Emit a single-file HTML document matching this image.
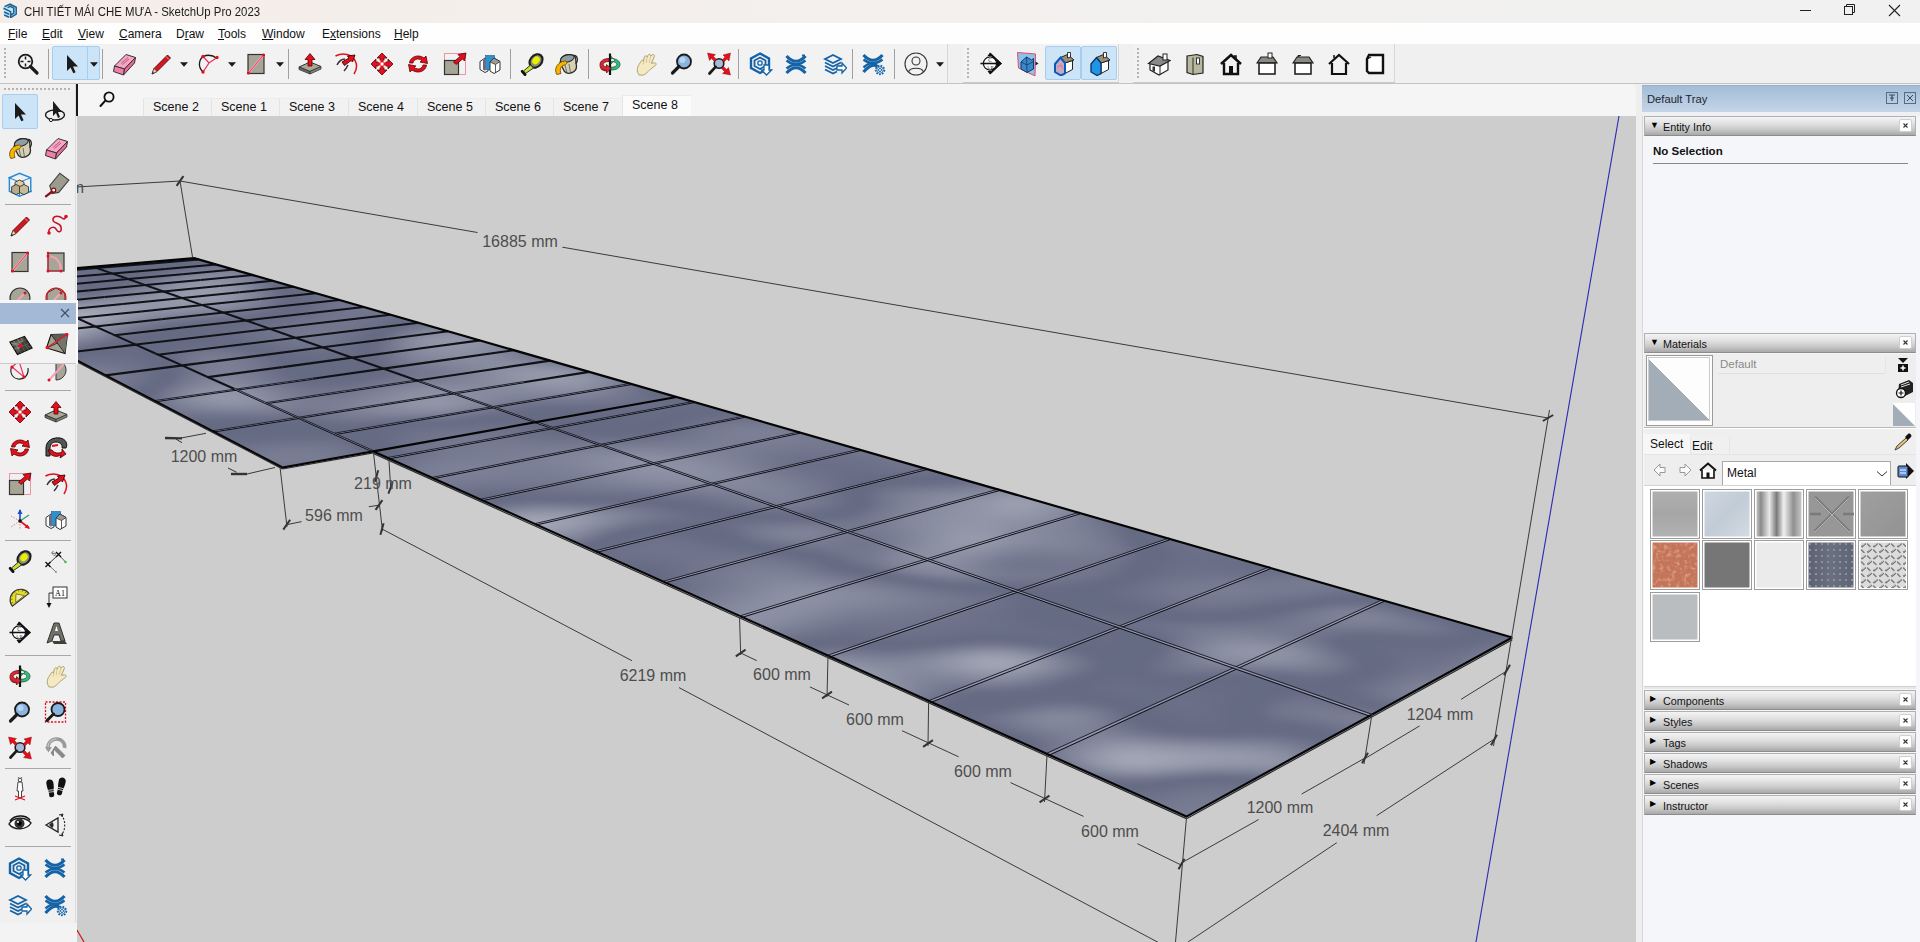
<!DOCTYPE html>
<html><head><meta charset="utf-8">
<style>
*{margin:0;padding:0;box-sizing:border-box}
html,body{width:1920px;height:942px;overflow:hidden;background:#f0f0f0;font-family:"Liberation Sans",sans-serif;color:#000}
.a{position:absolute}
#title{left:0;top:0;width:1920px;height:23px;background:linear-gradient(90deg,#f5ede9 0%,#f4efec 30%,#f2f1f0 70%,#f1f1f1 100%)}
#title .t{left:24px;top:4.5px;font-size:12.4px;color:#1b1b1b;white-space:nowrap;transform:scaleX(0.92);transform-origin:0 0}
#menu{left:0;top:23px;width:1920px;height:21px;background:#fefefe}
#menu span{position:absolute;top:4px;font-size:12px;color:#111;white-space:nowrap}
#tb{left:0;top:44px;width:1920px;height:40px;background:#f0f0f0;border-bottom:1px solid #cfcfcf}
.grp{position:absolute;top:0;height:39px;background:#f3f3f3;border-right:1px solid #dadada;border-bottom:1px solid #c8c8c8}
.grip{position:absolute;width:2px;background:repeating-linear-gradient(#b8b8b8 0 2px,transparent 2px 4px)}
.sep{position:absolute;width:1px;background:#a8a8a8}
.hl{position:absolute;background:#cce4f7;border:1px solid #99c9ef}
#tabs{left:77px;top:84px;width:1559px;height:32px;background:#f5f5f5;border-top-right-radius:6px}
.tab{position:absolute;top:14px;height:18px;border-left:1px solid #e4e4e4;border-top:1px solid #ececec;font-size:12.5px;color:#111;padding-left:9px;line-height:18px;background:#f2f2f2;white-space:nowrap}
#lt{left:0;top:84px;width:76px;height:839px;background:#f0f0f0;border-right:1px solid #dcdcdc}
#tray{left:1642px;top:85px;width:278px;height:857px;background:#f4f5fa}
.hdr{position:absolute;left:2px;width:272px;height:19px;background:linear-gradient(#f2f2f2 0%,#dcdcdc 40%,#c4c4c4 70%,#a9a9a9 100%);border:1px solid #9a9a9a;font-size:11.5px;color:#111}
.hdr .tri{position:absolute;left:6px;top:3px;font-size:9px}
.hdr .nm{position:absolute;left:19px;top:3px}
.hdr .x{position:absolute;right:4px;top:2px;width:12px;height:12px;background:#fff;border-radius:2px;font-size:9px;line-height:12px;text-align:center;color:#222}
</style></head><body>
<div id="title" class="a"><svg class="a" style="left:2px;top:3px" width="16" height="16" viewBox="0 0 16 16"><path d="M1.5 4 L8 1 L14.5 4 L14.5 11.5 L8.5 15 L1.5 12 Z" fill="#bfe6f8"/><g fill="none" stroke="#1d5f90" stroke-width="1.5"><path d="M2.5 3.6 L8 1.2 L14.2 4.2 L14.2 11.2 L9 14.4"/><path d="M5.5 4.6 L8.2 3.4 L11.8 5.2 L11.8 10.2 L9 12"/><path d="M1.5 5.2 L8.6 8.6 L8.6 15"/><path d="M2.2 9 L7 11.2"/><path d="M2.2 12 L7 14.3"/></g></svg>
<div class="a t">CHI TIẾT MÁI CHE MƯA - SketchUp Pro 2023</div>
<svg class="a" style="left:1790px;top:0" width="130" height="23"><line x1="10" y1="10.5" x2="21" y2="10.5" stroke="#222" stroke-width="1"/><rect x="54.5" y="6.5" width="8" height="8" fill="none" stroke="#222"/><path d="M56.5 6.5 V4.5 H64.5 V12.5 H62.5" fill="none" stroke="#222"/><path d="M99 5 L110 16 M110 5 L99 16" stroke="#222" stroke-width="1.1"/></svg>
</div>
<div id="menu" class="a">
<span style="left:8px"><u>F</u>ile</span><span style="left:42px"><u>E</u>dit</span><span style="left:78px"><u>V</u>iew</span><span style="left:119px"><u>C</u>amera</span><span style="left:176px">D<u>r</u>aw</span><span style="left:218px"><u>T</u>ools</span><span style="left:262px"><u>W</u>indow</span><span style="left:322px">E<u>x</u>tensions</span><span style="left:394px"><u>H</u>elp</span>
</div>
<div id="tb" class="a">
</div><div class="a" style="left:0;top:44px;width:948px;height:39px;background:#f2f2f2;border-right:1px solid #d6d6d6"></div><div class="a" style="left:963px;top:44px;width:156px;height:39px;background:#f2f2f2;border-right:1px solid #d6d6d6;border-bottom:1px solid #c8c8c8"></div><div class="a" style="left:1133px;top:44px;width:262px;height:39px;background:#f2f2f2;border-right:1px solid #d6d6d6;border-bottom:1px solid #c8c8c8"></div><div class="a" style="left:0;top:83px;width:1920px;height:1px;background:#c4c4c4"></div><div class="a" style="left:4px;top:48px;width:2px;height:32px;background:repeating-linear-gradient(#b4b4b4 0 2px,transparent 2px 4px)"></div><div class="a" style="left:967px;top:48px;width:2px;height:32px;background:repeating-linear-gradient(#b4b4b4 0 2px,transparent 2px 4px)"></div><div class="a" style="left:1137px;top:48px;width:2px;height:32px;background:repeating-linear-gradient(#b4b4b4 0 2px,transparent 2px 4px)"></div><div class="a" style="left:52px;top:46px;width:48px;height:34px;background:#cce4f7;border:1px solid #a6cdf0;border-radius:2px"></div><div class="a" style="left:87px;top:47px;width:1px;height:32px;background:#a6cdf0"></div><div class="a" style="left:1045px;top:46px;width:36px;height:34px;background:#cce4f7;border:1px solid #a6cdf0;border-radius:2px"></div><div class="a" style="left:1081px;top:46px;width:36px;height:34px;background:#cce4f7;border:1px solid #a6cdf0;border-radius:2px"></div><svg class="a" style="left:16px;top:52px" width="24" height="24" viewBox="0 0 24 24"><circle cx="9.5" cy="9.5" r="6.8" fill="none" stroke="#1b1b1b" stroke-width="1.8"/><path d="M9.5 4.5V7.5M9.5 11.5V14.5M4.5 9.5H7.5M11.5 9.5H14.5" stroke="#1b1b1b" stroke-width="1.5"/><path d="M14.5 14.5 L21 21" stroke="#1b1b1b" stroke-width="3.2" stroke-linecap="round"/></svg><div class="a" style="left:48px;top:49px;width:1px;height:30px;background:#a0a0a0"></div><div class="a" style="left:102px;top:49px;width:1px;height:30px;background:#a0a0a0"></div><svg class="a" style="left:60px;top:52px" width="24" height="24" viewBox="0 0 24 24"><path d="M7 3 L7 19 L10.6 15.6 L13.3 21.3 L15.6 20.2 L13 14.6 L18 14.6 Z" fill="#1b1b1b"/></svg><svg class="a" style="left:90px;top:62px" width="8" height="5" viewBox="0 0 7 4"><path d="M0 0 L7 0 L3.5 4 Z" fill="#1a1a1a"/></svg><svg class="a" style="left:112px;top:52px" width="24" height="24" viewBox="0 0 24 24"><path d="M2.5 14 L14 2.5 L23.5 5.5 L12.5 17 Z" fill="#f7a6c4" stroke="#333" stroke-width="1"/><path d="M2.5 14 L12.5 17 L11.5 23 L1.5 19.5 Z" fill="#f27fa8" stroke="#333" stroke-width="1"/><path d="M12.5 17 L23.5 5.5 L22.5 11 L11.5 23 Z" fill="#e66a9c" stroke="#333" stroke-width="1"/><path d="M9 11.5 L16 5.5 M10.5 12.5 L17 7" stroke="#9a3a6a" stroke-width="0.7"/></svg><svg class="a" style="left:149px;top:52px" width="24" height="24" viewBox="0 0 24 24"><path d="M3 22 L5 16.5 L18.5 3 L21.5 6 L8 19.5 Z" fill="#d8141e" stroke="#4a0a0a" stroke-width="0.9"/><path d="M3 22 L5 16.5 L8 19.5 Z" fill="#e8d8b0" stroke="#333" stroke-width="0.6"/><path d="M3 22 L3.8 19.8 L5.2 21.2Z" fill="#222"/><path d="M17 4.5 L20 7.5" stroke="#f0a0a0" stroke-width="1"/></svg><svg class="a" style="left:180px;top:62px" width="8" height="5" viewBox="0 0 7 4"><path d="M0 0 L7 0 L3.5 4 Z" fill="#1a1a1a"/></svg><svg class="a" style="left:197px;top:52px" width="24" height="24" viewBox="0 0 24 24"><path d="M6 20 C0 14 2 5 9 3.5 C13 2.7 17 4 20 6.5" fill="none" stroke="#1b1b1b" stroke-width="1.3"/><path d="M6 4.5 L12 11 L20 5.5 M12 11 L6 20" stroke="#e8305a" stroke-width="1.3" fill="none"/><circle cx="6" cy="4.5" r="1.7" fill="#e0101e"/><circle cx="20" cy="5.5" r="1.7" fill="#e0101e"/><circle cx="6" cy="20" r="1.7" fill="#e0101e"/></svg><svg class="a" style="left:228px;top:62px" width="8" height="5" viewBox="0 0 7 4"><path d="M0 0 L7 0 L3.5 4 Z" fill="#1a1a1a"/></svg><svg class="a" style="left:244px;top:52px" width="24" height="24" viewBox="0 0 24 24"><rect x="4" y="2.5" width="16" height="19" fill="#a7a696" stroke="#333" stroke-width="1.2"/><path d="M4.5 21 L19.5 3" stroke="#f2a2b8" stroke-width="2.4"/><path d="M4.5 21 L19.5 3" stroke="#e0304a" stroke-width="0.8"/><circle cx="19.5" cy="3" r="1.6" fill="#e0101e"/><circle cx="4.5" cy="21" r="1.6" fill="#e0101e"/></svg><svg class="a" style="left:276px;top:62px" width="8" height="5" viewBox="0 0 7 4"><path d="M0 0 L7 0 L3.5 4 Z" fill="#1a1a1a"/></svg><div class="a" style="left:288px;top:49px;width:1px;height:30px;background:#a0a0a0"></div><svg class="a" style="left:298px;top:52px" width="24" height="24" viewBox="0 0 24 24"><path d="M1 15 L12 10 L23 14.5 L12 19.5 Z" fill="#a9a898" stroke="#333" stroke-width="1"/><path d="M1 15 L12 19.5 L12 22 L1 17.5 Z" fill="#6d6c60" stroke="#333" stroke-width="0.8"/><path d="M12 19.5 L23 14.5 L23 17 L12 22 Z" fill="#88877a" stroke="#333" stroke-width="0.8"/><path d="M12 1.5 L17 7.5 L14 7.5 L14 14 L10 14 L10 7.5 L7 7.5 Z" fill="#e0101e" stroke="#5a0000" stroke-width="0.8"/></svg><svg class="a" style="left:334px;top:52px" width="24" height="24" viewBox="0 0 24 24"><path d="M1.5 4 C9 0 18 2 21.5 9.5 C23.5 14 22 19 20 22" fill="none" stroke="#e0101e" stroke-width="1.5"/><path d="M3 13 C5 9 8 7 11 7 M10 19 C12 17 13 15 14 13" fill="none" stroke="#333" stroke-width="1.5"/><path d="M8 10 L15 6 L13.5 4 L21 3 L18.5 10 L17 8.5 L10.5 13.5 Z" fill="#e0101e" stroke="#400" stroke-width="0.9"/></svg><svg class="a" style="left:370px;top:52px" width="24" height="24" viewBox="0 0 24 24"><path d="M12 1 L17 6 L14 6 L14 10 L18 10 L18 7 L23 12 L18 17 L18 14 L14 14 L14 18 L17 18 L12 23 L7 18 L10 18 L10 14 L6 14 L6 17 L1 12 L6 7 L6 10 L10 10 L10 6 L7 6 Z" fill="#e0101e" stroke="#600" stroke-width="0.8"/><rect x="10.5" y="10.5" width="3" height="3" fill="#fff"/><path d="M8.5 8.5h2v2h-2zM13.5 8.5h2v2h-2zM8.5 13.5h2v2h-2zM13.5 13.5h2v2h-2z" fill="#fff"/></svg><svg class="a" style="left:406px;top:52px" width="24" height="24" viewBox="0 0 24 24"><path d="M3.5 11 C4 5 12 1.5 18 6 L20 4 L21.5 11.5 L14 10 L16 8.5 C12 5.5 7.5 7.5 7 11 Z" fill="#e0101e" stroke="#600" stroke-width="0.8"/><path d="M20.5 13 C20 19 12 22.5 6 18 L4 20 L2.5 12.5 L10 14 L8 15.5 C12 18.5 16.5 16.5 17 13 Z" fill="#e0101e" stroke="#600" stroke-width="0.8"/></svg><svg class="a" style="left:443px;top:52px" width="24" height="24" viewBox="0 0 24 24"><rect x="1.5" y="1.5" width="21" height="21" fill="none" stroke="#f08aa0" stroke-width="0.9"/><rect x="1.5" y="8.5" width="14" height="14" fill="#a7a696" stroke="#333" stroke-width="1.2"/><path d="M10.5 10 L17 4.5 L15 2.5 L23 1 L21.5 9 L19.5 7 L13 12.5 Z" fill="#e0101e" stroke="#500" stroke-width="0.8"/></svg><svg class="a" style="left:478px;top:52px" width="24" height="24" viewBox="0 0 24 24"><path d="M2 9.5 L7 6 L10 7.5 L10 19 L7 20.5 L2 17.5 Z" fill="#fff" stroke="#333" stroke-width="1"/><rect x="7.5" y="3.5" width="9" height="14" fill="#2f90d0" stroke="#1a5a90" stroke-width="0.6"/><path d="M5 8 L7.5 6.5 L7.5 19 L5 17.5Z" fill="#6a6a78"/><path d="M12 10 L16 6 L22 9.5 L22 18 L16 21.5 L12 19 Z" fill="#fff" stroke="#333" stroke-width="1"/><path d="M12 10 L16 6 L22 9.5 L17.5 12.5 Z" fill="#9a9a9a" stroke="#333" stroke-width="0.8"/><path d="M17.5 12.5 L17.5 21" stroke="#333" stroke-width="0.8"/></svg><div class="a" style="left:510px;top:49px;width:1px;height:30px;background:#a0a0a0"></div><svg class="a" style="left:520px;top:52px" width="24" height="24" viewBox="0 0 24 24"><g transform="rotate(-50 16 9)"><ellipse cx="16" cy="9" rx="8.5" ry="6.8" fill="#1e1e1e"/><ellipse cx="16" cy="9" rx="6.3" ry="4.8" fill="#8c8c7c"/><ellipse cx="16.5" cy="8.6" rx="4.2" ry="3.3" fill="#e6f000"/></g><path d="M10.5 13 L13.5 16 L5.5 21.5 L3.5 19 Z" fill="#c6e232" stroke="#222" stroke-width="0.9"/><path d="M2.2 19.3 L5 22.6" stroke="#111" stroke-width="2.8" stroke-linecap="round"/></svg><svg class="a" style="left:554px;top:52px" width="24" height="24" viewBox="0 0 24 24"><path d="M7.5 6 C10 1.5 19.5 1.5 21.5 5.5 L22.5 14.5 C22.5 20 14.5 23.5 10.5 19.5 L6 11 Z" fill="#d8d0b2" stroke="#2a2a2a" stroke-width="1.3"/><path d="M6.5 9.5 C5.5 4.5 14 1 19.5 3.5 C22.5 6.5 14.5 12.5 6.5 9.5 Z" fill="#8e9ea4" stroke="#2a2a2a" stroke-width="1.1"/><path d="M11 13 L13 21 M15 12 L16.5 21" stroke="#555" stroke-width="0.8"/><path d="M19.5 3.5 C24 3 24.5 9.5 21.5 11.5" fill="none" stroke="#2a2a2a" stroke-width="1.2"/><path d="M2.8 22.5 C-0.5 17 3.5 9.5 11.5 9 C14 9.5 13 12.5 10.5 13 C6.5 14 5.5 17.5 7 21.5 Z" fill="#f7b500" stroke="#7a5200" stroke-width="0.9"/></svg><div class="a" style="left:588px;top:49px;width:1px;height:30px;background:#a0a0a0"></div><svg class="a" style="left:598px;top:52px" width="24" height="24" viewBox="0 0 24 24"><path d="M12 1.5 L12 23" stroke="#111" stroke-width="2.2"/><path d="M11 6.5 C5.5 6.5 2 9 2 12.5 C2 15.5 4 17.5 8.5 18 L8.5 21 L13 16.5 L8.5 12.5 L8.5 15 C6.3 14.6 5.2 13.6 5.2 12.5 C5.2 10.6 7.8 9.5 11 9.5 Z" fill="#d42a32" stroke="#6a0000" stroke-width="0.7"/><path d="M2 12.5 C2 15.5 4 17.5 8.5 18 L8.5 19.5 C3.5 19 1.5 16.5 1.8 13.5Z" fill="#9a1a20"/><path d="M13 6.5 C18.5 6.5 22 9 22 12.5 C22 16 18.5 18 13 18 L13 15.3 C16.6 15.3 18.8 14 18.8 12.5 C18.8 10.8 16.5 9.5 13 9.5 L13 11.8 L16.8 8.2 L13 4.5 Z" fill="#3ab87c" stroke="#0a5030" stroke-width="0.7"/></svg><svg class="a" style="left:634px;top:52px" width="24" height="24" viewBox="0 0 24 24"><path d="M5 23 C2.5 19.5 3 15.5 5 12.5 L7 9.5 C7.6 7.6 9.3 7.7 9.6 9.3 L10.2 5.2 C10.7 3.2 12.9 3.3 13.1 5.2 L13.8 3.6 C14.4 1.6 16.9 1.9 16.8 4 L17.8 3 C18.9 1.8 21 2.9 20.3 4.7 L17.4 11.3 L20.3 10.8 C22.4 10.6 22.8 13 20.8 13.9 L16.4 17.3 C13.6 20.2 11.4 22.2 9.2 23.2 Z" fill="#f5e9c2" stroke="#a89868" stroke-width="0.9"/><path d="M9.6 9.3 L9.2 12.5 M13.1 5.2 L12.3 11 M16.8 4 L15.2 10.8" stroke="#c8b888" stroke-width="0.7" fill="none"/></svg><svg class="a" style="left:670px;top:52px" width="24" height="24" viewBox="0 0 24 24"><circle cx="14" cy="9.5" r="7" fill="#8ab4e0" stroke="#1b1b1b" stroke-width="1.8"/><circle cx="12.5" cy="8" r="3" fill="#b8d4f0"/><path d="M9 14.5 L2.5 21" stroke="#1b1b1b" stroke-width="3.2" stroke-linecap="round"/></svg><svg class="a" style="left:707px;top:52px" width="24" height="24" viewBox="0 0 24 24"><circle cx="12" cy="11.5" r="4.8" fill="#a4bcd8" stroke="#1b1b1b" stroke-width="1.6"/><path d="M8.6 14.9 L2.5 21.5" stroke="#1b1b1b" stroke-width="2.8" stroke-linecap="round"/><path d="M0.5 1 L8.5 2.5 L6.5 4.5 L9.5 7.5 L7.5 9.5 L4.5 6.5 L2.5 8.5Z M23.5 1 L22 9 L20 7 L17 10 L15 8 L18 5 L16 3Z M23.5 23 L15.5 21.5 L17.5 19.5 L14.5 16.5 L16.5 14.5 L19.5 17.5 L21.5 15.5Z" fill="#e0101e" stroke="#800" stroke-width="0.4"/></svg><div class="a" style="left:738px;top:49px;width:1px;height:30px;background:#a0a0a0"></div><svg class="a" style="left:749px;top:52px" width="24" height="24" viewBox="0 0 24 24"><path d="M11 1.5 L20 6.5 L20 16 L11 21 L2 16 L2 6.5 Z" fill="none" stroke="#1463a6" stroke-width="2.4"/><path d="M11 5.5 L16.5 8.5 L16.5 14 L11 17 L5.5 14 L5.5 8.5 Z" fill="none" stroke="#1463a6" stroke-width="1.8"/><circle cx="11" cy="11" r="2.2" fill="none" stroke="#1463a6" stroke-width="1.3"/><path d="M15 13 L20 13 L20 18 L22.5 18 L17.5 23 L12.5 18 L15 18 Z" fill="#fff" stroke="#1463a6" stroke-width="1.3"/></svg><svg class="a" style="left:785px;top:53px" width="24" height="24" viewBox="0 0 24 24"><g fill="none" stroke="#1463a6" stroke-linecap="butt"><path d="M1.5 3 Q11 13.5 20.5 3" stroke-width="3.2"/><path d="M1.5 20 Q11 9.5 20.5 20" stroke-width="3.2"/><path d="M1.5 7.5 Q11 15 20.5 7.5" stroke-width="2.4"/><path d="M1.5 15.5 Q11 8 20.5 15.5" stroke-width="2.4"/></g><path d="M17 1.5h3v2h-3z" fill="#1463a6"/></svg><svg class="a" style="left:823px;top:52px" width="24" height="24" viewBox="0 0 24 24"><path d="M2 7 L10 3 L18 7 L10 11 Z" fill="none" stroke="#1463a6" stroke-width="1.8"/><path d="M2 10.5 L10 14.5 L18 10.5 M2 14 L10 18 L18 14 M2 17.5 L10 21.5 L14 19.5" fill="none" stroke="#1463a6" stroke-width="1.8"/><path d="M14 14 L19 14 L19 11 L23.5 16 L19 21 L19 18 L14 18 Z" fill="#fff" stroke="#1463a6" stroke-width="1.3"/></svg><div class="a" style="left:852px;top:49px;width:1px;height:30px;background:#a0a0a0"></div><svg class="a" style="left:862px;top:52px" width="24" height="24" viewBox="0 0 24 24"><g fill="none" stroke="#1463a6"><path d="M1.5 3 Q11 13.5 20.5 3" stroke-width="3.2"/><path d="M1.5 20 Q11 9.5 16 15" stroke-width="3.2"/><path d="M1.5 7.5 Q11 15 20.5 7.5" stroke-width="2.4"/><path d="M1.5 15.5 Q9 9 14 12" stroke-width="2.4"/></g><circle cx="18" cy="18" r="4.3" fill="#fff" stroke="#1463a6" stroke-width="1.8" stroke-dasharray="1.7 1.2"/><circle cx="18" cy="18" r="3.2" fill="#fff" stroke="#1463a6" stroke-width="0.9"/><circle cx="18" cy="18" r="1.5" fill="none" stroke="#1463a6" stroke-width="1"/></svg><div class="a" style="left:894px;top:49px;width:1px;height:30px;background:#a0a0a0"></div><svg class="a" style="left:904px;top:52px" width="24" height="24" viewBox="0 0 24 24"><circle cx="12" cy="12" r="11" fill="none" stroke="#333" stroke-width="1.1"/><circle cx="12" cy="9" r="4" fill="none" stroke="#333" stroke-width="1.1"/><path d="M4.5 20 C6 15 18 15 19.5 20" fill="none" stroke="#333" stroke-width="1.1"/></svg><svg class="a" style="left:936px;top:62px" width="8" height="5" viewBox="0 0 7 4"><path d="M0 0 L7 0 L3.5 4 Z" fill="#1a1a1a"/></svg><svg class="a" style="left:979px;top:52px" width="24" height="24" viewBox="0 0 24 24"><circle cx="11" cy="11.5" r="6.6" fill="#fff" stroke="#111" stroke-width="1.2"/><path d="M1.5 11.5 H21" stroke="#111" stroke-width="1.6"/><path d="M11 1.5 L21.5 11.5 L11 21.5" fill="none" stroke="#111" stroke-width="1.8"/><path d="M23 11.5 L18 7.5 L18 15.5Z M11 0.5 L8.5 4 L13.5 4Z M11 22.5 L8.5 19 L13.5 19Z" fill="#111"/><text x="11" y="10" font-size="5.5" text-anchor="middle" font-family="Liberation Serif" fill="#111">C</text><text x="11" y="17.3" font-size="4.6" text-anchor="middle" font-family="Liberation Serif" fill="#111">A B</text></svg><svg class="a" style="left:1016px;top:52px" width="24" height="24" viewBox="0 0 24 24"><path d="M1.5 0.5 L19.5 2 L19 24 L2.5 16 Z" fill="#8ec0ec" stroke="#e04a6a" stroke-width="1"/><path d="M5 10 L10.5 5 L15.5 8 L17.5 6.5 L17.5 17 L11 20.5 L5 17Z" fill="#3a88c8" stroke="#123a66" stroke-width="1"/><path d="M10.5 5 L11 20.5 M5 10 L11 13 L17.5 9.5" stroke="#123a66" stroke-width="0.8" fill="none"/><path d="M19.5 9.5 L22.5 11.5 L19.5 13.5Z" fill="#222"/></svg><svg class="a" style="left:1052px;top:52px" width="24" height="24" viewBox="0 0 24 24"><path d="M13 11 L20.5 8.5 L20.5 17.5 L13 21.5 Z" fill="#fff" stroke="#222" stroke-width="1"/><path d="M8.5 5.5 L15.5 2.5 L22 8 L13 11 Z" fill="#9a8e78" stroke="#222" stroke-width="1"/><path d="M15.5 0.5 L18.5 0.5 L18.5 5 L15.5 6Z" fill="#fff" stroke="#222" stroke-width="0.9"/><path d="M3 12 L8.5 5.5 L13 11 L13 21.5 L9 23.5 L3 20 Z" fill="#c8a8c0" stroke="#0a5ab8" stroke-width="2"/><path d="M5.5 15 L9 13 L11 17" stroke="#e06080" stroke-width="0.8" fill="none"/></svg><svg class="a" style="left:1088px;top:52px" width="24" height="24" viewBox="0 0 24 24"><path d="M13 11 L20.5 8.5 L20.5 17.5 L13 21.5 Z" fill="#fff" stroke="#222" stroke-width="1"/><path d="M8.5 5.5 L15.5 2.5 L22 8 L13 11 Z" fill="#9a8e78" stroke="#222" stroke-width="1"/><path d="M15.5 0.5 L18.5 0.5 L18.5 5 L15.5 6Z" fill="#fff" stroke="#222" stroke-width="0.9"/><path d="M3 12 L8.5 5.5 L13 11 L13 21.5 L9 23.5 L3 20 Z" fill="#1e96e8" stroke="#0a3060" stroke-width="1.3"/></svg><svg class="a" style="left:1147px;top:52px" width="24" height="24" viewBox="0 0 24 24"><path d="M3 11 L12 5 L21 9 L21 18 L12 23 L3 18 Z" fill="#fff" stroke="#222" stroke-width="1.2"/><path d="M1.5 11.5 L11 4 L23 8.5 L13 14 Z" fill="#8a8a8a" stroke="#222" stroke-width="1.2"/><path d="M13 14 L13 23" stroke="#222" stroke-width="1"/><rect x="16" y="2" width="4" height="6" fill="#fff" stroke="#222" stroke-width="1"/><rect x="5.5" y="14.5" width="2.5" height="5" fill="#333"/></svg><svg class="a" style="left:1183px;top:52px" width="24" height="24" viewBox="0 0 24 24"><path d="M4 4 L14 2.5 L20 4.5 L20 21 L10 22.5 L4 20.5 Z" fill="#b8b8a0" stroke="#222" stroke-width="1.2"/><path d="M10 5.5 L10 22.5" stroke="#222" stroke-width="0.9"/><rect x="13.5" y="6" width="3" height="6" fill="#fff" stroke="#222" stroke-width="0.9"/></svg><svg class="a" style="left:1219px;top:52px" width="24" height="24" viewBox="0 0 24 24"><path d="M2 12 L12 3 L22 12" fill="none" stroke="#111" stroke-width="2.6"/><path d="M5 11 L5 22 L19 22 L19 11" fill="none" stroke="#111" stroke-width="2.4"/><rect x="10" y="14" width="4" height="8" fill="#111"/><path d="M15 4 L17 4 L17 7" stroke="#111" stroke-width="1.5" fill="none"/></svg><svg class="a" style="left:1255px;top:52px" width="24" height="24" viewBox="0 0 24 24"><path d="M2 11 L6 5 L18 5 L22 11 Z" fill="#8a8a82" stroke="#222" stroke-width="1.2"/><rect x="4" y="11" width="16" height="11" fill="#fff" stroke="#222" stroke-width="1.6"/><rect x="13" y="1" width="4" height="5" fill="#fff" stroke="#222" stroke-width="1"/></svg><svg class="a" style="left:1291px;top:52px" width="24" height="24" viewBox="0 0 24 24"><path d="M2 11 L6 5 L18 5 L22 11 Z" fill="#8a8a82" stroke="#222" stroke-width="1.2"/><rect x="4" y="11" width="16" height="11" fill="#fff" stroke="#222" stroke-width="1.6"/><path d="M7 5 L7 3.5 L10 3.5" stroke="#222" stroke-width="1"/></svg><svg class="a" style="left:1327px;top:52px" width="24" height="24" viewBox="0 0 24 24"><path d="M2 12 L12 3 L22 12" fill="none" stroke="#111" stroke-width="2.2"/><path d="M5 11 L5 22 L19 22 L19 11" fill="none" stroke="#111" stroke-width="2.2"/><path d="M7 6 L7 3" stroke="#111" stroke-width="1.5"/></svg><svg class="a" style="left:1363px;top:52px" width="24" height="24" viewBox="0 0 24 24"><path d="M6 3 L20 3 L20 21 L6 21 L4 19 L4 7 Z" fill="#fff" stroke="#111" stroke-width="2.4"/><path d="M4 7 L8 5" stroke="#111" stroke-width="1.2"/></svg><div>
</div>
<div id="tabs" class="a">
<svg class="a" style="left:22px;top:6px" width="16" height="20" viewBox="0 0 16 20"><circle cx="10" cy="7" r="4.6" fill="none" stroke="#111" stroke-width="1.8"/><path d="M6.6 10.4 L1.5 16" stroke="#111" stroke-width="2" stroke-linecap="round"/></svg><div class="tab" style="left:66px;width:69px;line-height:16px">Scene 2</div><div class="tab" style="left:134px;width:69px;line-height:16px">Scene 1</div><div class="tab" style="left:202px;width:69px;line-height:16px">Scene 3</div><div class="tab" style="left:271px;width:69px;line-height:16px">Scene 4</div><div class="tab" style="left:340px;width:69px;line-height:16px">Scene 5</div><div class="tab" style="left:408px;width:69px;line-height:16px">Scene 6</div><div class="tab" style="left:476px;width:69px;line-height:16px">Scene 7</div><div class="tab" style="left:545px;top:11px;height:21px;width:69px;background:#fbfbfb;line-height:19px">Scene 8</div>
</div>
<div class="a" style="left:76px;top:84px;width:2px;height:32px;background:#1a1a1a"></div>
<div id="lt" class="a">
</div><div class="a" style="left:4px;top:88px;width:68px;height:2px;background:repeating-linear-gradient(90deg,#b4b4b4 0 2px,transparent 2px 4px)"></div><div class="a" style="left:2px;top:94px;width:36px;height:35px;background:#cce4f7;border:1px solid #a6cdf0;border-radius:2px"></div><svg class="a" style="left:8px;top:100px" width="24" height="24" viewBox="0 0 24 24"><path d="M7 3 L7 19 L10.6 15.6 L13.3 21.3 L15.6 20.2 L13 14.6 L18 14.6 Z" fill="#1b1b1b"/></svg><svg class="a" style="left:44px;top:100px" width="24" height="24" viewBox="0 0 24 24"><ellipse cx="11" cy="15" rx="9.5" ry="5" fill="none" stroke="#1b1b1b" stroke-width="1.4"/><path d="M9 1 L9 16 L12 13 L14 18 L16 17 L14 12 L18 12 Z" fill="#1b1b1b"/><circle cx="7" cy="20" r="1.6" fill="#fff" stroke="#1b1b1b" stroke-width="1"/></svg><svg class="a" style="left:8px;top:136px" width="24" height="24" viewBox="0 0 24 24"><path d="M7.5 6 C10 1.5 19.5 1.5 21.5 5.5 L22.5 14.5 C22.5 20 14.5 23.5 10.5 19.5 L6 11 Z" fill="#d8d0b2" stroke="#2a2a2a" stroke-width="1.3"/><path d="M6.5 9.5 C5.5 4.5 14 1 19.5 3.5 C22.5 6.5 14.5 12.5 6.5 9.5 Z" fill="#8e9ea4" stroke="#2a2a2a" stroke-width="1.1"/><path d="M11 13 L13 21 M15 12 L16.5 21" stroke="#555" stroke-width="0.8"/><path d="M19.5 3.5 C24 3 24.5 9.5 21.5 11.5" fill="none" stroke="#2a2a2a" stroke-width="1.2"/><path d="M2.8 22.5 C-0.5 17 3.5 9.5 11.5 9 C14 9.5 13 12.5 10.5 13 C6.5 14 5.5 17.5 7 21.5 Z" fill="#f7b500" stroke="#7a5200" stroke-width="0.9"/></svg><svg class="a" style="left:44px;top:136px" width="24" height="24" viewBox="0 0 24 24"><path d="M2.5 14 L14 2.5 L23.5 5.5 L12.5 17 Z" fill="#f7a6c4" stroke="#333" stroke-width="1"/><path d="M2.5 14 L12.5 17 L11.5 23 L1.5 19.5 Z" fill="#f27fa8" stroke="#333" stroke-width="1"/><path d="M12.5 17 L23.5 5.5 L22.5 11 L11.5 23 Z" fill="#e66a9c" stroke="#333" stroke-width="1"/><path d="M9 11.5 L16 5.5 M10.5 12.5 L17 7" stroke="#9a3a6a" stroke-width="0.7"/></svg><svg class="a" style="left:8px;top:214px" width="24" height="24" viewBox="0 0 24 24"><path d="M3 22 L5 16.5 L18.5 3 L21.5 6 L8 19.5 Z" fill="#d8141e" stroke="#4a0a0a" stroke-width="0.9"/><path d="M3 22 L5 16.5 L8 19.5 Z" fill="#e8d8b0" stroke="#333" stroke-width="0.6"/><path d="M3 22 L3.8 19.8 L5.2 21.2Z" fill="#222"/><path d="M17 4.5 L20 7.5" stroke="#f0a0a0" stroke-width="1"/></svg><svg class="a" style="left:44px;top:214px" width="24" height="24" viewBox="0 0 24 24"><path d="M5 19 C4 13 10 12 12 15 C14 19 18 19 17 13 C16 8 8 10 9 5 C10 1 16 2 18 4 C20 6 22 4 22 2" fill="none" stroke="#c8102a" stroke-width="1.6"/><circle cx="5" cy="19" r="1.8" fill="#e0101e"/><circle cx="22" cy="2.5" r="1.8" fill="#e0101e"/></svg><svg class="a" style="left:8px;top:250px" width="24" height="24" viewBox="0 0 24 24"><rect x="4" y="2.5" width="16" height="19" fill="#a7a696" stroke="#333" stroke-width="1.2"/><path d="M4.5 21 L19.5 3" stroke="#f2a2b8" stroke-width="2.4"/><path d="M4.5 21 L19.5 3" stroke="#e0304a" stroke-width="0.8"/><circle cx="19.5" cy="3" r="1.6" fill="#e0101e"/><circle cx="4.5" cy="21" r="1.6" fill="#e0101e"/></svg><svg class="a" style="left:44px;top:250px" width="24" height="24" viewBox="0 0 24 24"><rect x="4" y="3" width="16" height="18" fill="#a7a696" stroke="#333" stroke-width="1.2"/><path d="M4 6 C12 6 17 12 17 21" fill="none" stroke="#f2a2b8" stroke-width="2.2"/><path d="M4 6 L4 21 L17 21" stroke="#e0304a" stroke-width="1.2" fill="none"/><circle cx="4" cy="6" r="1.5" fill="#e0101e"/><circle cx="4" cy="21" r="1.5" fill="#e0101e"/><circle cx="17" cy="21" r="1.5" fill="#e0101e"/><circle cx="4" cy="3" r="1.2" fill="#e0101e"/></svg><svg class="a" style="left:8px;top:286px" width="24" height="24" viewBox="0 0 24 24"><circle cx="12" cy="12" r="10" fill="#a7a696" stroke="#333" stroke-width="1.2"/><path d="M7 17 L17 7" stroke="#f2a2b8" stroke-width="2.2"/><circle cx="7" cy="17" r="1.5" fill="#e0101e"/><circle cx="17" cy="7" r="1.5" fill="#e0101e"/></svg><svg class="a" style="left:44px;top:286px" width="24" height="24" viewBox="0 0 24 24"><path d="M12 2 L21 7 L21 17 L12 22 L3 17 L3 7Z" fill="#a7a696" stroke="#333" stroke-width="1"/><circle cx="12" cy="12" r="10" fill="none" stroke="#e0101e" stroke-width="1.2"/><path d="M7 17 L17 7" stroke="#f2a2b8" stroke-width="2.2"/><circle cx="7" cy="17" r="1.5" fill="#e0101e"/><circle cx="17" cy="7" r="1.5" fill="#e0101e"/></svg><svg class="a" style="left:8px;top:400px" width="24" height="24" viewBox="0 0 24 24"><path d="M12 1 L17 6 L14 6 L14 10 L18 10 L18 7 L23 12 L18 17 L18 14 L14 14 L14 18 L17 18 L12 23 L7 18 L10 18 L10 14 L6 14 L6 17 L1 12 L6 7 L6 10 L10 10 L10 6 L7 6 Z" fill="#e0101e" stroke="#600" stroke-width="0.8"/><rect x="10.5" y="10.5" width="3" height="3" fill="#fff"/><path d="M8.5 8.5h2v2h-2zM13.5 8.5h2v2h-2zM8.5 13.5h2v2h-2zM13.5 13.5h2v2h-2z" fill="#fff"/></svg><svg class="a" style="left:44px;top:400px" width="24" height="24" viewBox="0 0 24 24"><path d="M1 15 L12 10 L23 14.5 L12 19.5 Z" fill="#a9a898" stroke="#333" stroke-width="1"/><path d="M1 15 L12 19.5 L12 22 L1 17.5 Z" fill="#6d6c60" stroke="#333" stroke-width="0.8"/><path d="M12 19.5 L23 14.5 L23 17 L12 22 Z" fill="#88877a" stroke="#333" stroke-width="0.8"/><path d="M12 1.5 L17 7.5 L14 7.5 L14 14 L10 14 L10 7.5 L7 7.5 Z" fill="#e0101e" stroke="#5a0000" stroke-width="0.8"/></svg><svg class="a" style="left:8px;top:436px" width="24" height="24" viewBox="0 0 24 24"><path d="M3.5 11 C4 5 12 1.5 18 6 L20 4 L21.5 11.5 L14 10 L16 8.5 C12 5.5 7.5 7.5 7 11 Z" fill="#e0101e" stroke="#600" stroke-width="0.8"/><path d="M20.5 13 C20 19 12 22.5 6 18 L4 20 L2.5 12.5 L10 14 L8 15.5 C12 18.5 16.5 16.5 17 13 Z" fill="#e0101e" stroke="#600" stroke-width="0.8"/></svg><svg class="a" style="left:44px;top:436px" width="24" height="24" viewBox="0 0 24 24"><path d="M2 12 C2 4 10 1 16 2 C22 3 24 8 22 12 L18 12 C19 9 16 6 12 6 C8 6 6 9 6 12 L6 20 L2 20Z" fill="#555" stroke="#111" stroke-width="1"/><path d="M4 14 C6 20 12 22 17 19 L16 22 L22 18 L18 13 L18 16 C14 18 10 17 8 14Z" fill="#e0101e" stroke="#400" stroke-width="0.8"/><path d="M8 10 L14 9" stroke="#e0101e" stroke-width="2"/></svg><svg class="a" style="left:8px;top:472px" width="24" height="24" viewBox="0 0 24 24"><rect x="1.5" y="1.5" width="21" height="21" fill="none" stroke="#f08aa0" stroke-width="0.9"/><rect x="1.5" y="8.5" width="14" height="14" fill="#a7a696" stroke="#333" stroke-width="1.2"/><path d="M10.5 10 L17 4.5 L15 2.5 L23 1 L21.5 9 L19.5 7 L13 12.5 Z" fill="#e0101e" stroke="#500" stroke-width="0.8"/></svg><svg class="a" style="left:44px;top:472px" width="24" height="24" viewBox="0 0 24 24"><path d="M1.5 4 C9 0 18 2 21.5 9.5 C23.5 14 22 19 20 22" fill="none" stroke="#e0101e" stroke-width="1.5"/><path d="M3 13 C5 9 8 7 11 7 M10 19 C12 17 13 15 14 13" fill="none" stroke="#333" stroke-width="1.5"/><path d="M8 10 L15 6 L13.5 4 L21 3 L18.5 10 L17 8.5 L10.5 13.5 Z" fill="#e0101e" stroke="#400" stroke-width="0.9"/></svg><svg class="a" style="left:8px;top:508px" width="24" height="24" viewBox="0 0 24 24"><path d="M12 13 L12 2" stroke="#1a4ad0" stroke-width="1.6"/><path d="M12 1 L9.5 6 L14.5 6Z" fill="#1a4ad0"/><path d="M12 13 L21 20" stroke="#e0101e" stroke-width="1.6"/><path d="M22 21 L16.5 19.5 L19.5 16.5Z" fill="#e0101e"/><path d="M12 13 L21 7" stroke="#30a060" stroke-width="1.4"/><path d="M12 13 L3 19 M12 13 L3 8 M12 13 L12 22" stroke="#f08080" stroke-width="1" stroke-dasharray="1.5 1.5"/><circle cx="12" cy="13" r="1.8" fill="#111"/></svg><svg class="a" style="left:44px;top:508px" width="24" height="24" viewBox="0 0 24 24"><path d="M2 9.5 L7 6 L10 7.5 L10 19 L7 20.5 L2 17.5 Z" fill="#fff" stroke="#333" stroke-width="1"/><rect x="7.5" y="3.5" width="9" height="14" fill="#2f90d0" stroke="#1a5a90" stroke-width="0.6"/><path d="M5 8 L7.5 6.5 L7.5 19 L5 17.5Z" fill="#6a6a78"/><path d="M12 10 L16 6 L22 9.5 L22 18 L16 21.5 L12 19 Z" fill="#fff" stroke="#333" stroke-width="1"/><path d="M12 10 L16 6 L22 9.5 L17.5 12.5 Z" fill="#9a9a9a" stroke="#333" stroke-width="0.8"/><path d="M17.5 12.5 L17.5 21" stroke="#333" stroke-width="0.8"/></svg><svg class="a" style="left:8px;top:549px" width="24" height="24" viewBox="0 0 24 24"><g transform="rotate(-50 16 9)"><ellipse cx="16" cy="9" rx="8.5" ry="6.8" fill="#1e1e1e"/><ellipse cx="16" cy="9" rx="6.3" ry="4.8" fill="#8c8c7c"/><ellipse cx="16.5" cy="8.6" rx="4.2" ry="3.3" fill="#e6f000"/></g><path d="M10.5 13 L13.5 16 L5.5 21.5 L3.5 19 Z" fill="#c6e232" stroke="#222" stroke-width="0.9"/><path d="M2.2 19.3 L5 22.6" stroke="#111" stroke-width="2.8" stroke-linecap="round"/></svg><svg class="a" style="left:44px;top:549px" width="24" height="24" viewBox="0 0 24 24"><path d="M4 15.5 L14.5 5.5" stroke="#222" stroke-width="0.9"/><path d="M14.5 5.5 L21.5 13" stroke="#333" stroke-width="0.8"/><path d="M4 15.5 L12 23" stroke="#555" stroke-width="0.8"/><path d="M12 3 L17 8 M17 3 L12 8 M1.5 13 L6.5 18 M6.5 13 L1.5 18" stroke="#111" stroke-width="1.4"/><circle cx="21.5" cy="13" r="1.3" fill="#40c050"/><circle cx="12" cy="23" r="0.9" fill="#888"/><text x="8.5" y="8" font-size="6.5" font-family="Liberation Sans" fill="#222" transform="rotate(-40 8.5 6)">5</text></svg><svg class="a" style="left:8px;top:585px" width="24" height="24" viewBox="0 0 24 24"><g transform="rotate(-38 12 14)"><path d="M1.5 15 A10.5 10.5 0 0 1 22.5 15 Z" fill="#e4dc1c" stroke="#333" stroke-width="1.1"/><path d="M6.5 14 L12 7.5 L17.5 14 Z" fill="#f4f0a8" stroke="#555" stroke-width="0.7"/><path d="M3 12 L4.5 12.6 M4.5 8.5 L5.8 9.6 M7.5 6 L8.3 7.3 M12 4.6 V6 M16.5 6 L15.7 7.3 M19.5 8.5 L18.2 9.6 M21 12 L19.5 12.6" stroke="#555" stroke-width="0.7"/></g></svg><svg class="a" style="left:44px;top:585px" width="24" height="24" viewBox="0 0 24 24"><rect x="9" y="2" width="14" height="11" fill="#fff" stroke="#333" stroke-width="1"/><text x="16" y="11" font-size="8" text-anchor="middle" font-family="Liberation Serif">A1</text><path d="M5 8 L9 8 M5 8 L5 20" stroke="#333" stroke-width="1"/><path d="M2.5 18 L7.5 18 L5 23Z" fill="#111"/></svg><svg class="a" style="left:8px;top:621px" width="24" height="24" viewBox="0 0 24 24"><circle cx="11" cy="11.5" r="6.6" fill="#fff" stroke="#111" stroke-width="1.2"/><path d="M1.5 11.5 H21" stroke="#111" stroke-width="1.6"/><path d="M11 1.5 L21.5 11.5 L11 21.5" fill="none" stroke="#111" stroke-width="1.8"/><path d="M23 11.5 L18 7.5 L18 15.5Z M11 0.5 L8.5 4 L13.5 4Z M11 22.5 L8.5 19 L13.5 19Z" fill="#111"/><text x="11" y="10" font-size="5.5" text-anchor="middle" font-family="Liberation Serif" fill="#111">C</text><text x="11" y="17.3" font-size="4.6" text-anchor="middle" font-family="Liberation Serif" fill="#111">A B</text></svg><svg class="a" style="left:44px;top:621px" width="24" height="24" viewBox="0 0 24 24"><path d="M3 22 L10 2 L15 2 L21 20 L17 20 L15 14 L10 14 L8 20 Z" fill="#707068" stroke="#333" stroke-width="1"/><path d="M11 10 L12.5 5 L14 10Z" fill="#fff"/><path d="M8 20 L10 23 L23 23 L21 20" fill="#404038"/></svg><svg class="a" style="left:8px;top:664px" width="24" height="24" viewBox="0 0 24 24"><path d="M12 1.5 L12 23" stroke="#111" stroke-width="2.2"/><path d="M11 6.5 C5.5 6.5 2 9 2 12.5 C2 15.5 4 17.5 8.5 18 L8.5 21 L13 16.5 L8.5 12.5 L8.5 15 C6.3 14.6 5.2 13.6 5.2 12.5 C5.2 10.6 7.8 9.5 11 9.5 Z" fill="#d42a32" stroke="#6a0000" stroke-width="0.7"/><path d="M2 12.5 C2 15.5 4 17.5 8.5 18 L8.5 19.5 C3.5 19 1.5 16.5 1.8 13.5Z" fill="#9a1a20"/><path d="M13 6.5 C18.5 6.5 22 9 22 12.5 C22 16 18.5 18 13 18 L13 15.3 C16.6 15.3 18.8 14 18.8 12.5 C18.8 10.8 16.5 9.5 13 9.5 L13 11.8 L16.8 8.2 L13 4.5 Z" fill="#3ab87c" stroke="#0a5030" stroke-width="0.7"/></svg><svg class="a" style="left:44px;top:664px" width="24" height="24" viewBox="0 0 24 24"><path d="M5 23 C2.5 19.5 3 15.5 5 12.5 L7 9.5 C7.6 7.6 9.3 7.7 9.6 9.3 L10.2 5.2 C10.7 3.2 12.9 3.3 13.1 5.2 L13.8 3.6 C14.4 1.6 16.9 1.9 16.8 4 L17.8 3 C18.9 1.8 21 2.9 20.3 4.7 L17.4 11.3 L20.3 10.8 C22.4 10.6 22.8 13 20.8 13.9 L16.4 17.3 C13.6 20.2 11.4 22.2 9.2 23.2 Z" fill="#f5e9c2" stroke="#a89868" stroke-width="0.9"/><path d="M9.6 9.3 L9.2 12.5 M13.1 5.2 L12.3 11 M16.8 4 L15.2 10.8" stroke="#c8b888" stroke-width="0.7" fill="none"/></svg><svg class="a" style="left:8px;top:700px" width="24" height="24" viewBox="0 0 24 24"><circle cx="14" cy="9.5" r="7" fill="#8ab4e0" stroke="#1b1b1b" stroke-width="1.8"/><circle cx="12.5" cy="8" r="3" fill="#b8d4f0"/><path d="M9 14.5 L2.5 21" stroke="#1b1b1b" stroke-width="3.2" stroke-linecap="round"/></svg><svg class="a" style="left:44px;top:700px" width="24" height="24" viewBox="0 0 24 24"><rect x="1.5" y="2" width="20" height="20" fill="none" stroke="#e0101e" stroke-width="1.3" stroke-dasharray="2 1.5"/><circle cx="14" cy="9.5" r="6.5" fill="#8ab4e0" stroke="#1b1b1b" stroke-width="1.8"/><path d="M9.5 14 L3 20.5" stroke="#1b1b1b" stroke-width="3" stroke-linecap="round"/></svg><svg class="a" style="left:8px;top:736px" width="24" height="24" viewBox="0 0 24 24"><circle cx="12" cy="11.5" r="4.8" fill="#a4bcd8" stroke="#1b1b1b" stroke-width="1.6"/><path d="M8.6 14.9 L2.5 21.5" stroke="#1b1b1b" stroke-width="2.8" stroke-linecap="round"/><path d="M0.5 1 L8.5 2.5 L6.5 4.5 L9.5 7.5 L7.5 9.5 L4.5 6.5 L2.5 8.5Z M23.5 1 L22 9 L20 7 L17 10 L15 8 L18 5 L16 3Z M23.5 23 L15.5 21.5 L17.5 19.5 L14.5 16.5 L16.5 14.5 L19.5 17.5 L21.5 15.5Z" fill="#e0101e" stroke="#800" stroke-width="0.4"/></svg><svg class="a" style="left:44px;top:736px" width="24" height="24" viewBox="0 0 24 24"><path d="M4.5 14 C2.5 8 7 3 12.5 3 C18 3 21.5 7.5 20.5 12" fill="none" stroke="#9a9a9a" stroke-width="3.6"/><path d="M4.5 14 C2.5 8 7 3 12.5 3" fill="none" stroke="#c8c8c8" stroke-width="1.2"/><path d="M1 11 L8 11 L4.5 16.5 Z" fill="#9a9a9a"/><path d="M11.5 10 L21 19.5 L18.5 22 L9.5 13 L9.5 20 L7 17 Z" fill="#8a8a8a" stroke="#6a6a6a" stroke-width="0.6"/></svg><svg class="a" style="left:8px;top:777px" width="24" height="24" viewBox="0 0 24 24"><path d="M12 1.5 a1.8 1.8 0 1 1 0.1 0Z M10 5 L14 5 L15 14 L13.5 14 L13.5 21 L10.5 21 L10.5 14 L9 14 Z" fill="#fff" stroke="#333" stroke-width="0.9"/><circle cx="12" cy="3" r="1.8" fill="#fff" stroke="#333" stroke-width="0.9"/><path d="M7 19 L17 23 M17 19 L7 23" stroke="#e0101e" stroke-width="1.1"/></svg><svg class="a" style="left:44px;top:777px" width="24" height="24" viewBox="0 0 24 24"><g transform="rotate(-8 6.5 11)"><path d="M3 6 C2.8 1.5 9.5 1.2 10 5.5 C10.4 9.5 9.5 12 9.2 14.5 L9.2 18.5 C9 21 4.2 21 4.2 18.5 L4.2 14.5 C3.4 11.5 3.1 9 3 6Z" fill="#111"/><path d="M3.8 13 H9.6 M4.2 15 H9.3" stroke="#fff" stroke-width="0.7"/></g><g transform="rotate(14 17 9)"><path d="M13.5 4 C13.3 -0.5 20 -0.8 20.5 3.5 C20.9 7.5 20 10 19.7 12.5 L19.7 16.5 C19.5 19 14.7 19 14.7 16.5 L14.7 12.5 C13.9 9.5 13.6 7 13.5 4Z" fill="#111"/><path d="M14.3 11 H20.1 M14.7 13 H19.8" stroke="#fff" stroke-width="0.7"/></g></svg><svg class="a" style="left:8px;top:813px" width="24" height="24" viewBox="0 0 24 24"><path d="M1 11 C5 4 17 3 23 10 C19 17 6 18 1 11Z" fill="#fff" stroke="#222" stroke-width="1.4"/><circle cx="11.5" cy="10.5" r="5" fill="#333"/><circle cx="11.5" cy="10.5" r="2.2" fill="#000"/><circle cx="10" cy="9" r="1" fill="#fff"/><path d="M2 8 C6 2 17 1 22 7" fill="none" stroke="#111" stroke-width="1.6"/></svg><svg class="a" style="left:44px;top:813px" width="24" height="24" viewBox="0 0 24 24"><path d="M17 2 C22 6 22 18 17 22" fill="none" stroke="#222" stroke-width="1.1" stroke-dasharray="2 1.5"/><path d="M2 12 L14 5 L14 19 Z" fill="none" stroke="#222" stroke-width="1.3"/><path d="M8 9 C10 10 10 14 8 15 L5 12Z" fill="#2a2a2a"/><path d="M15 2 L19 1 L18 4 M15 22 L19 23 L18 20" stroke="#222" stroke-width="1" fill="none"/></svg><svg class="a" style="left:8px;top:857px" width="24" height="24" viewBox="0 0 24 24"><path d="M11 1.5 L20 6.5 L20 16 L11 21 L2 16 L2 6.5 Z" fill="none" stroke="#1463a6" stroke-width="2.4"/><path d="M11 5.5 L16.5 8.5 L16.5 14 L11 17 L5.5 14 L5.5 8.5 Z" fill="none" stroke="#1463a6" stroke-width="1.8"/><circle cx="11" cy="11" r="2.2" fill="none" stroke="#1463a6" stroke-width="1.3"/><path d="M15 13 L20 13 L20 18 L22.5 18 L17.5 23 L12.5 18 L15 18 Z" fill="#fff" stroke="#1463a6" stroke-width="1.3"/></svg><svg class="a" style="left:44px;top:857px" width="24" height="24" viewBox="0 0 24 24"><g fill="none" stroke="#1463a6" stroke-linecap="butt"><path d="M1.5 3 Q11 13.5 20.5 3" stroke-width="3.2"/><path d="M1.5 20 Q11 9.5 20.5 20" stroke-width="3.2"/><path d="M1.5 7.5 Q11 15 20.5 7.5" stroke-width="2.4"/><path d="M1.5 15.5 Q11 8 20.5 15.5" stroke-width="2.4"/></g><path d="M17 1.5h3v2h-3z" fill="#1463a6"/></svg><svg class="a" style="left:8px;top:893px" width="24" height="24" viewBox="0 0 24 24"><path d="M2 7 L10 3 L18 7 L10 11 Z" fill="none" stroke="#1463a6" stroke-width="1.8"/><path d="M2 10.5 L10 14.5 L18 10.5 M2 14 L10 18 L18 14 M2 17.5 L10 21.5 L14 19.5" fill="none" stroke="#1463a6" stroke-width="1.8"/><path d="M14 14 L19 14 L19 11 L23.5 16 L19 21 L19 18 L14 18 Z" fill="#fff" stroke="#1463a6" stroke-width="1.3"/></svg><svg class="a" style="left:44px;top:893px" width="24" height="24" viewBox="0 0 24 24"><g fill="none" stroke="#1463a6"><path d="M1.5 3 Q11 13.5 20.5 3" stroke-width="3.2"/><path d="M1.5 20 Q11 9.5 16 15" stroke-width="3.2"/><path d="M1.5 7.5 Q11 15 20.5 7.5" stroke-width="2.4"/><path d="M1.5 15.5 Q9 9 14 12" stroke-width="2.4"/></g><circle cx="18" cy="18" r="4.3" fill="#fff" stroke="#1463a6" stroke-width="1.8" stroke-dasharray="1.7 1.2"/><circle cx="18" cy="18" r="3.2" fill="#fff" stroke="#1463a6" stroke-width="0.9"/><circle cx="18" cy="18" r="1.5" fill="none" stroke="#1463a6" stroke-width="1"/></svg><svg class="a" style="left:6px;top:171px" width="27" height="27" viewBox="0 0 24 24"><path d="M3 6 L12 2 L22 6 L22 18 L12 22.5 L3 18 Z" fill="none" stroke="#2a8ad8" stroke-width="1.3"/><path d="M3 6 L12 10 L22 6 M12 10 L12 22.5" stroke="#2a8ad8" stroke-width="1" fill="none"/><path d="M8 10 L12 8 L16 10 L16 14 L12 16 L8 14Z" fill="#d8cca8" stroke="#333" stroke-width="0.8"/><path d="M5 14 L9 12 L13 14 L13 19 L9 21 L5 19Z" fill="#b8ac88" stroke="#333" stroke-width="0.8"/><path d="M12 14 L16 12 L20 14 L20 19 L16 21 L12 19Z" fill="#c8bc98" stroke="#333" stroke-width="0.8"/><circle cx="3" cy="6" r="1" fill="#2a8ad8"/><circle cx="22" cy="18" r="1" fill="#2a8ad8"/></svg><svg class="a" style="left:43px;top:171px" width="27" height="27" viewBox="0 0 24 24"><path d="M6 13 L15 2 L23 8 L14 19 L8 20 Z" fill="#9c9c8c" stroke="#444" stroke-width="1"/><circle cx="9.5" cy="17" r="1.8" fill="#fff" stroke="#800" stroke-width="1"/><path d="M8.5 18 L2 23" stroke="#8a1020" stroke-width="2"/></svg><svg class="a" style="left:8px;top:358px" width="24" height="24" viewBox="0 0 24 24"><path d="M4 8 C1 14 4 20 10 21 C16 22 21 17 20 10" fill="none" stroke="#1b1b1b" stroke-width="1.1"/><path d="M4 9 L16 19 L11 3 M4 9 L11 3" stroke="#e8305a" stroke-width="1.1" fill="none"/><circle cx="4" cy="9" r="1.6" fill="#e0101e"/><circle cx="16" cy="19" r="1.6" fill="#e0101e"/></svg><svg class="a" style="left:44px;top:358px" width="24" height="24" viewBox="0 0 24 24"><path d="M12 2 L12 22 C18 22 22 17 22 12 C22 7 18 2 12 2Z" fill="#a7a696" stroke="#333" stroke-width="1"/><path d="M5 22 L20 6" stroke="#f2a2b8" stroke-width="2"/><circle cx="5" cy="22" r="1.5" fill="#e0101e"/></svg><div class="a" style="left:5px;top:204px;width:66px;height:1px;background:#a8a8a8"></div><div class="a" style="left:5px;top:390px;width:66px;height:1px;background:#a8a8a8"></div><div class="a" style="left:5px;top:540px;width:66px;height:1px;background:#a8a8a8"></div><div class="a" style="left:5px;top:655px;width:66px;height:1px;background:#a8a8a8"></div><div class="a" style="left:5px;top:768px;width:66px;height:1px;background:#a8a8a8"></div><div class="a" style="left:5px;top:846px;width:66px;height:1px;background:#a8a8a8"></div><div>
</div>
<div class="a" style="left:0;top:923px;width:77px;height:19px;background:#f3f3f3"></div>
<svg style="position:absolute;left:77px;top:116px" width="1559" height="826" viewBox="77 116 1559 826">
<defs>
<filter id="cloud" x="0" y="0" width="100%" height="100%" filterUnits="userSpaceOnUse" primitiveUnits="userSpaceOnUse"><feTurbulence type="fractalNoise" baseFrequency="0.0035 0.014" numOctaves="2" seed="11" result="n"/><feColorMatrix in="n" type="matrix" values="0 0 0 0 0.60  0 0 0 0 0.62  0 0 0 0 0.68  2.6 0 0 0 -1.38" result="lt"/><feColorMatrix in="n" type="matrix" values="0 0 0 0 0.30  0 0 0 0 0.32  0 0 0 0 0.41  -2.6 0 0 0 1.25" result="dk"/><feMerge result="m0"><feMergeNode in="dk"/><feMergeNode in="lt"/></feMerge><feGaussianBlur in="m0" stdDeviation="3" result="m"/><feComposite in="m" in2="SourceGraphic" operator="in"/></filter>
<linearGradient id="tex"><stop offset="0" stop-color="#fff"/><stop offset="1" stop-color="#fff"/></linearGradient>
</defs>
<rect x="77" y="116" width="1559" height="826" fill="#cdcdcd"/><polygon points="1512.3,637.5 1186.4,816.6 373.3,451.4 282.4,467.6 -75.5,280.9 194.2,258.2" fill="#666b84"/><g filter="url(#cloud)"><polygon points="1512.3,637.5 1186.4,816.6 373.3,451.4 282.4,467.6 -75.5,280.9 194.2,258.2" fill="#000"/></g><line x1="1383.4" y1="600.4" x2="1314.2" y2="632.2" stroke="#9ca0b0" stroke-width="0.9" /><line x1="1383.9" y1="601.5" x2="1314.7" y2="633.2" stroke="#0e0f16" stroke-width="1.0" /><line x1="1382.9" y1="599.4" x2="1313.8" y2="631.1" stroke="#1e2030" stroke-width="0.95" /><line x1="1314.2" y1="632.2" x2="1236.4" y2="667.8" stroke="#9ca0b0" stroke-width="0.9" /><line x1="1314.7" y1="633.2" x2="1236.9" y2="668.9" stroke="#0e0f16" stroke-width="1.0" /><line x1="1313.7" y1="631.1" x2="1235.9" y2="666.7" stroke="#1e2030" stroke-width="0.95" /><line x1="1236.4" y1="667.8" x2="1148.3" y2="708.2" stroke="#9ca0b0" stroke-width="0.9" /><line x1="1236.9" y1="669.0" x2="1148.8" y2="709.4" stroke="#0e0f16" stroke-width="1.0" /><line x1="1235.9" y1="666.7" x2="1147.8" y2="707.0" stroke="#1e2030" stroke-width="0.95" /><line x1="1148.3" y1="708.2" x2="1047.7" y2="754.3" stroke="#9ca0b0" stroke-width="0.9" /><line x1="1148.9" y1="709.4" x2="1048.3" y2="755.6" stroke="#0e0f16" stroke-width="1.0" /><line x1="1147.7" y1="707.0" x2="1047.1" y2="753.1" stroke="#1e2030" stroke-width="0.95" /><line x1="1270.0" y1="567.8" x2="1199.0" y2="595.7" stroke="#9ca0b0" stroke-width="0.9" /><line x1="1270.4" y1="568.8" x2="1199.4" y2="596.7" stroke="#0e0f16" stroke-width="1.0" /><line x1="1269.6" y1="566.8" x2="1198.6" y2="594.8" stroke="#1e2030" stroke-width="0.95" /><line x1="1199.0" y1="595.7" x2="1119.7" y2="626.9" stroke="#9ca0b0" stroke-width="0.9" /><line x1="1199.4" y1="596.7" x2="1120.1" y2="627.9" stroke="#0e0f16" stroke-width="1.0" /><line x1="1198.6" y1="594.7" x2="1119.3" y2="625.9" stroke="#1e2030" stroke-width="0.95" /><line x1="1119.7" y1="626.9" x2="1030.7" y2="661.9" stroke="#9ca0b0" stroke-width="0.9" /><line x1="1120.1" y1="628.0" x2="1031.1" y2="662.9" stroke="#0e0f16" stroke-width="1.0" /><line x1="1119.3" y1="625.8" x2="1030.3" y2="660.8" stroke="#1e2030" stroke-width="0.95" /><line x1="1030.7" y1="661.9" x2="930.0" y2="701.4" stroke="#9ca0b0" stroke-width="0.9" /><line x1="1031.2" y1="663.0" x2="930.4" y2="702.6" stroke="#0e0f16" stroke-width="1.0" /><line x1="1030.2" y1="660.7" x2="929.5" y2="700.3" stroke="#1e2030" stroke-width="0.95" /><line x1="1169.5" y1="538.9" x2="1097.5" y2="563.6" stroke="#9ca0b0" stroke-width="0.9" /><line x1="1169.8" y1="539.8" x2="1097.8" y2="564.5" stroke="#0e0f16" stroke-width="1.0" /><line x1="1169.1" y1="538.0" x2="1097.2" y2="562.7" stroke="#1e2030" stroke-width="0.95" /><line x1="1097.5" y1="563.6" x2="1017.7" y2="591.1" stroke="#9ca0b0" stroke-width="0.9" /><line x1="1097.8" y1="564.6" x2="1018.0" y2="592.0" stroke="#0e0f16" stroke-width="1.0" /><line x1="1097.2" y1="562.7" x2="1017.4" y2="590.1" stroke="#1e2030" stroke-width="0.95" /><line x1="1017.7" y1="591.1" x2="928.7" y2="621.7" stroke="#9ca0b0" stroke-width="0.9" /><line x1="1018.0" y1="592.1" x2="929.1" y2="622.7" stroke="#0e0f16" stroke-width="1.0" /><line x1="1017.3" y1="590.1" x2="928.4" y2="620.7" stroke="#1e2030" stroke-width="0.95" /><line x1="928.7" y1="621.7" x2="828.9" y2="656.0" stroke="#9ca0b0" stroke-width="0.9" /><line x1="929.1" y1="622.8" x2="829.3" y2="657.1" stroke="#0e0f16" stroke-width="1.0" /><line x1="928.3" y1="620.6" x2="828.5" y2="654.9" stroke="#1e2030" stroke-width="0.95" /><line x1="1079.7" y1="513.0" x2="1007.4" y2="535.1" stroke="#9ca0b0" stroke-width="0.9" /><line x1="1080.0" y1="513.9" x2="1007.7" y2="536.0" stroke="#0e0f16" stroke-width="1.0" /><line x1="1079.4" y1="512.2" x2="1007.1" y2="534.3" stroke="#1e2030" stroke-width="0.95" /><line x1="1007.4" y1="535.1" x2="927.7" y2="559.5" stroke="#9ca0b0" stroke-width="0.9" /><line x1="1007.7" y1="536.1" x2="928.0" y2="560.4" stroke="#0e0f16" stroke-width="1.0" /><line x1="1007.1" y1="534.2" x2="927.4" y2="558.6" stroke="#1e2030" stroke-width="0.95" /><line x1="927.7" y1="559.5" x2="839.4" y2="586.5" stroke="#9ca0b0" stroke-width="0.9" /><line x1="928.0" y1="560.5" x2="839.7" y2="587.5" stroke="#0e0f16" stroke-width="1.0" /><line x1="927.4" y1="558.6" x2="839.1" y2="585.6" stroke="#1e2030" stroke-width="0.95" /><line x1="839.4" y1="586.5" x2="741.1" y2="616.6" stroke="#9ca0b0" stroke-width="0.9" /><line x1="839.7" y1="587.5" x2="741.4" y2="617.6" stroke="#0e0f16" stroke-width="1.0" /><line x1="839.1" y1="585.5" x2="740.8" y2="615.6" stroke="#1e2030" stroke-width="0.95" /><line x1="999.1" y1="489.8" x2="926.9" y2="509.7" stroke="#9ca0b0" stroke-width="0.9" /><line x1="999.3" y1="490.6" x2="927.1" y2="510.5" stroke="#0e0f16" stroke-width="1.0" /><line x1="998.8" y1="489.0" x2="926.7" y2="508.9" stroke="#1e2030" stroke-width="0.95" /><line x1="926.9" y1="509.7" x2="847.8" y2="531.5" stroke="#9ca0b0" stroke-width="0.9" /><line x1="927.1" y1="510.6" x2="848.0" y2="532.3" stroke="#0e0f16" stroke-width="1.0" /><line x1="926.7" y1="508.8" x2="847.5" y2="530.6" stroke="#1e2030" stroke-width="0.95" /><line x1="847.8" y1="531.5" x2="760.6" y2="555.5" stroke="#9ca0b0" stroke-width="0.9" /><line x1="848.0" y1="532.4" x2="760.9" y2="556.4" stroke="#0e0f16" stroke-width="1.0" /><line x1="847.5" y1="530.6" x2="760.4" y2="554.6" stroke="#1e2030" stroke-width="0.95" /><line x1="760.6" y1="555.5" x2="664.2" y2="582.0" stroke="#9ca0b0" stroke-width="0.9" /><line x1="760.9" y1="556.4" x2="664.4" y2="583.0" stroke="#0e0f16" stroke-width="1.0" /><line x1="760.4" y1="554.5" x2="663.9" y2="581.1" stroke="#1e2030" stroke-width="0.95" /><line x1="926.3" y1="468.9" x2="854.6" y2="486.8" stroke="#9ca0b0" stroke-width="0.9" /><line x1="926.5" y1="469.7" x2="854.8" y2="487.6" stroke="#0e0f16" stroke-width="1.0" /><line x1="926.1" y1="468.1" x2="854.4" y2="486.0" stroke="#1e2030" stroke-width="0.95" /><line x1="854.6" y1="486.8" x2="776.3" y2="506.4" stroke="#9ca0b0" stroke-width="0.9" /><line x1="854.8" y1="487.6" x2="776.5" y2="507.2" stroke="#0e0f16" stroke-width="1.0" /><line x1="854.4" y1="486.0" x2="776.1" y2="505.6" stroke="#1e2030" stroke-width="0.95" /><line x1="776.3" y1="506.4" x2="690.6" y2="527.9" stroke="#9ca0b0" stroke-width="0.9" /><line x1="776.5" y1="507.3" x2="690.8" y2="528.7" stroke="#0e0f16" stroke-width="1.0" /><line x1="776.1" y1="505.5" x2="690.3" y2="527.0" stroke="#1e2030" stroke-width="0.95" /><line x1="690.6" y1="527.9" x2="596.2" y2="551.5" stroke="#9ca0b0" stroke-width="0.9" /><line x1="690.8" y1="528.8" x2="596.4" y2="552.4" stroke="#0e0f16" stroke-width="1.0" /><line x1="690.3" y1="527.0" x2="595.9" y2="550.6" stroke="#1e2030" stroke-width="0.95" /><line x1="860.2" y1="449.9" x2="789.2" y2="466.1" stroke="#9ca0b0" stroke-width="0.9" /><line x1="860.3" y1="450.6" x2="789.3" y2="466.9" stroke="#0e0f16" stroke-width="1.0" /><line x1="860.0" y1="449.1" x2="789.0" y2="465.4" stroke="#1e2030" stroke-width="0.95" /><line x1="789.2" y1="466.1" x2="712.0" y2="483.8" stroke="#9ca0b0" stroke-width="0.9" /><line x1="789.4" y1="466.9" x2="712.2" y2="484.6" stroke="#0e0f16" stroke-width="1.0" /><line x1="789.0" y1="465.4" x2="711.8" y2="483.1" stroke="#1e2030" stroke-width="0.95" /><line x1="712.0" y1="483.8" x2="627.8" y2="503.2" stroke="#9ca0b0" stroke-width="0.9" /><line x1="712.2" y1="484.6" x2="628.0" y2="504.0" stroke="#0e0f16" stroke-width="1.0" /><line x1="711.8" y1="483.0" x2="627.7" y2="502.3" stroke="#1e2030" stroke-width="0.95" /><line x1="627.8" y1="503.2" x2="535.7" y2="524.3" stroke="#9ca0b0" stroke-width="0.9" /><line x1="628.0" y1="504.0" x2="535.9" y2="525.1" stroke="#0e0f16" stroke-width="1.0" /><line x1="627.6" y1="502.3" x2="535.5" y2="523.5" stroke="#1e2030" stroke-width="0.95" /><line x1="799.9" y1="432.5" x2="729.8" y2="447.4" stroke="#9ca0b0" stroke-width="0.9" /><line x1="800.1" y1="433.2" x2="729.9" y2="448.1" stroke="#0e0f16" stroke-width="1.0" /><line x1="799.8" y1="431.8" x2="729.6" y2="446.7" stroke="#1e2030" stroke-width="0.95" /><line x1="729.8" y1="447.4" x2="653.9" y2="463.4" stroke="#9ca0b0" stroke-width="0.9" /><line x1="729.9" y1="448.1" x2="654.0" y2="464.2" stroke="#0e0f16" stroke-width="1.0" /><line x1="729.6" y1="446.6" x2="653.7" y2="462.7" stroke="#1e2030" stroke-width="0.95" /><line x1="653.9" y1="463.4" x2="571.4" y2="480.9" stroke="#9ca0b0" stroke-width="0.9" /><line x1="654.0" y1="464.2" x2="571.5" y2="481.7" stroke="#0e0f16" stroke-width="1.0" /><line x1="653.7" y1="462.7" x2="571.2" y2="480.1" stroke="#1e2030" stroke-width="0.95" /><line x1="571.4" y1="480.9" x2="481.5" y2="500.0" stroke="#9ca0b0" stroke-width="0.9" /><line x1="571.5" y1="481.7" x2="481.6" y2="500.8" stroke="#0e0f16" stroke-width="1.0" /><line x1="571.2" y1="480.1" x2="481.3" y2="499.1" stroke="#1e2030" stroke-width="0.95" /><line x1="744.8" y1="416.6" x2="675.6" y2="430.2" stroke="#9ca0b0" stroke-width="0.9" /><line x1="744.9" y1="417.3" x2="675.8" y2="430.9" stroke="#0e0f16" stroke-width="1.0" /><line x1="744.6" y1="416.0" x2="675.5" y2="429.6" stroke="#1e2030" stroke-width="0.95" /><line x1="675.6" y1="430.2" x2="601.0" y2="444.9" stroke="#9ca0b0" stroke-width="0.9" /><line x1="675.8" y1="430.9" x2="601.2" y2="445.6" stroke="#0e0f16" stroke-width="1.0" /><line x1="675.5" y1="429.5" x2="600.9" y2="444.2" stroke="#1e2030" stroke-width="0.95" /><line x1="601.0" y1="444.9" x2="520.3" y2="460.8" stroke="#9ca0b0" stroke-width="0.9" /><line x1="601.2" y1="445.6" x2="520.4" y2="461.5" stroke="#0e0f16" stroke-width="1.0" /><line x1="600.9" y1="444.2" x2="520.1" y2="460.0" stroke="#1e2030" stroke-width="0.95" /><line x1="520.3" y1="460.8" x2="432.6" y2="478.0" stroke="#9ca0b0" stroke-width="0.9" /><line x1="520.4" y1="461.5" x2="432.8" y2="478.8" stroke="#0e0f16" stroke-width="1.0" /><line x1="520.1" y1="460.0" x2="432.5" y2="477.3" stroke="#1e2030" stroke-width="0.95" /><line x1="694.1" y1="402.1" x2="626.0" y2="414.5" stroke="#9ca0b0" stroke-width="0.9" /><line x1="694.2" y1="402.7" x2="626.1" y2="415.2" stroke="#0e0f16" stroke-width="1.0" /><line x1="694.0" y1="401.4" x2="625.9" y2="413.9" stroke="#1e2030" stroke-width="0.95" /><line x1="626.0" y1="414.5" x2="552.8" y2="428.0" stroke="#9ca0b0" stroke-width="0.9" /><line x1="626.1" y1="415.2" x2="552.9" y2="428.7" stroke="#0e0f16" stroke-width="1.0" /><line x1="625.9" y1="413.9" x2="552.7" y2="427.3" stroke="#1e2030" stroke-width="0.95" /><line x1="552.8" y1="428.0" x2="473.8" y2="442.5" stroke="#9ca0b0" stroke-width="0.9" /><line x1="552.9" y1="428.7" x2="473.9" y2="443.2" stroke="#0e0f16" stroke-width="1.0" /><line x1="552.7" y1="427.3" x2="473.7" y2="441.8" stroke="#1e2030" stroke-width="0.95" /><line x1="473.8" y1="442.5" x2="388.4" y2="458.1" stroke="#9ca0b0" stroke-width="0.9" /><line x1="474.0" y1="443.2" x2="388.5" y2="458.9" stroke="#0e0f16" stroke-width="1.0" /><line x1="473.7" y1="441.8" x2="388.3" y2="457.4" stroke="#1e2030" stroke-width="0.95" /><line x1="631.2" y1="384.0" x2="564.7" y2="395.1" stroke="#9ca0b0" stroke-width="0.9" /><line x1="631.3" y1="384.6" x2="564.8" y2="395.8" stroke="#0e0f16" stroke-width="1.0" /><line x1="631.1" y1="383.3" x2="564.5" y2="394.5" stroke="#1e2030" stroke-width="0.95" /><line x1="564.7" y1="395.1" x2="493.4" y2="407.1" stroke="#9ca0b0" stroke-width="0.9" /><line x1="564.8" y1="395.8" x2="493.5" y2="407.8" stroke="#0e0f16" stroke-width="1.0" /><line x1="564.5" y1="394.5" x2="493.3" y2="406.5" stroke="#1e2030" stroke-width="0.95" /><line x1="493.4" y1="407.1" x2="416.8" y2="420.0" stroke="#9ca0b0" stroke-width="0.9" /><line x1="493.5" y1="407.8" x2="416.9" y2="420.7" stroke="#0e0f16" stroke-width="1.0" /><line x1="493.3" y1="406.5" x2="416.7" y2="419.4" stroke="#1e2030" stroke-width="0.95" /><line x1="416.8" y1="420.0" x2="334.4" y2="433.9" stroke="#9ca0b0" stroke-width="0.9" /><line x1="416.9" y1="420.7" x2="334.5" y2="434.6" stroke="#0e0f16" stroke-width="1.0" /><line x1="416.7" y1="419.3" x2="334.3" y2="433.2" stroke="#1e2030" stroke-width="0.95" /><line x1="589.2" y1="371.9" x2="523.9" y2="382.2" stroke="#101218" stroke-width="2.11" /><line x1="523.9" y1="382.2" x2="454.1" y2="393.3" stroke="#9ca0b0" stroke-width="0.9" /><line x1="524.0" y1="382.8" x2="454.2" y2="393.9" stroke="#0e0f16" stroke-width="1.0" /><line x1="523.8" y1="381.6" x2="454.0" y2="392.6" stroke="#1e2030" stroke-width="0.95" /><line x1="454.1" y1="393.3" x2="379.5" y2="405.1" stroke="#9ca0b0" stroke-width="0.9" /><line x1="454.2" y1="393.9" x2="379.6" y2="405.7" stroke="#0e0f16" stroke-width="1.0" /><line x1="454.0" y1="392.6" x2="379.4" y2="404.5" stroke="#1e2030" stroke-width="0.95" /><line x1="379.5" y1="405.1" x2="299.3" y2="417.8" stroke="#9ca0b0" stroke-width="0.9" /><line x1="379.6" y1="405.7" x2="299.4" y2="418.4" stroke="#0e0f16" stroke-width="1.0" /><line x1="379.4" y1="404.4" x2="299.2" y2="417.1" stroke="#1e2030" stroke-width="0.95" /><line x1="299.3" y1="417.8" x2="213.1" y2="431.5" stroke="#9ca0b0" stroke-width="0.9" /><line x1="299.4" y1="418.5" x2="213.2" y2="432.1" stroke="#0e0f16" stroke-width="1.0" /><line x1="299.2" y1="417.1" x2="213.0" y2="430.8" stroke="#1e2030" stroke-width="0.95" /><line x1="550.1" y1="360.6" x2="485.9" y2="370.2" stroke="#101218" stroke-width="2.09" /><line x1="485.9" y1="370.2" x2="417.4" y2="380.5" stroke="#101218" stroke-width="2.1" /><line x1="417.4" y1="380.5" x2="344.3" y2="391.5" stroke="#9ca0b0" stroke-width="0.9" /><line x1="417.5" y1="381.1" x2="344.4" y2="392.1" stroke="#0e0f16" stroke-width="1.0" /><line x1="417.4" y1="379.9" x2="344.2" y2="390.9" stroke="#1e2030" stroke-width="0.95" /><line x1="344.3" y1="391.5" x2="266.1" y2="403.2" stroke="#9ca0b0" stroke-width="0.9" /><line x1="344.4" y1="392.1" x2="266.1" y2="403.8" stroke="#0e0f16" stroke-width="1.0" /><line x1="344.2" y1="390.8" x2="266.0" y2="402.6" stroke="#1e2030" stroke-width="0.95" /><line x1="513.8" y1="350.2" x2="450.8" y2="359.1" stroke="#101218" stroke-width="2.08" /><line x1="450.8" y1="359.1" x2="383.9" y2="368.6" stroke="#101218" stroke-width="2.09" /><line x1="383.9" y1="368.6" x2="312.6" y2="378.8" stroke="#101218" stroke-width="2.1" /><line x1="312.6" y1="378.8" x2="236.4" y2="389.6" stroke="#9ca0b0" stroke-width="0.9" /><line x1="312.7" y1="379.3" x2="236.5" y2="390.2" stroke="#0e0f16" stroke-width="1.0" /><line x1="312.5" y1="378.2" x2="236.3" y2="389.0" stroke="#1e2030" stroke-width="0.95" /><line x1="236.4" y1="389.6" x2="155.0" y2="401.1" stroke="#9ca0b0" stroke-width="0.9" /><line x1="236.5" y1="390.2" x2="155.1" y2="401.8" stroke="#0e0f16" stroke-width="1.0" /><line x1="236.3" y1="389.0" x2="154.9" y2="400.5" stroke="#1e2030" stroke-width="0.95" /><line x1="479.9" y1="340.4" x2="418.0" y2="348.8" stroke="#101218" stroke-width="2.07" /><line x1="418.0" y1="348.8" x2="352.3" y2="357.6" stroke="#101218" stroke-width="2.08" /><line x1="352.3" y1="357.6" x2="282.4" y2="367.1" stroke="#101218" stroke-width="2.09" /><line x1="282.4" y1="367.1" x2="208.0" y2="377.1" stroke="#101218" stroke-width="2.1" /><line x1="448.1" y1="331.3" x2="387.5" y2="339.1" stroke="#101218" stroke-width="2.06" /><line x1="387.5" y1="339.1" x2="323.2" y2="347.3" stroke="#101218" stroke-width="2.06" /><line x1="323.2" y1="347.3" x2="255.1" y2="356.1" stroke="#101218" stroke-width="2.07" /><line x1="255.1" y1="356.1" x2="182.7" y2="365.4" stroke="#101218" stroke-width="2.08" /><line x1="182.7" y1="365.4" x2="105.6" y2="375.4" stroke="#101218" stroke-width="2.09" /><line x1="418.4" y1="322.7" x2="358.7" y2="330.0" stroke="#101218" stroke-width="2.05" /><line x1="358.7" y1="330.0" x2="295.7" y2="337.8" stroke="#101218" stroke-width="2.05" /><line x1="295.7" y1="337.8" x2="228.9" y2="346.0" stroke="#101218" stroke-width="2.06" /><line x1="228.9" y1="346.0" x2="158.1" y2="354.7" stroke="#101218" stroke-width="2.07" /><line x1="390.4" y1="314.7" x2="332.0" y2="321.5" stroke="#101218" stroke-width="2.04" /><line x1="332.0" y1="321.5" x2="270.3" y2="328.8" stroke="#101218" stroke-width="2.04" /><line x1="270.3" y1="328.8" x2="205.2" y2="336.5" stroke="#101218" stroke-width="2.05" /><line x1="205.2" y1="336.5" x2="136.2" y2="344.6" stroke="#101218" stroke-width="2.06" /><line x1="136.2" y1="344.6" x2="63.1" y2="353.2" stroke="#101218" stroke-width="2.07" /><line x1="364.1" y1="307.1" x2="306.7" y2="313.6" stroke="#101218" stroke-width="2.03" /><line x1="306.7" y1="313.6" x2="246.1" y2="320.4" stroke="#101218" stroke-width="2.03" /><line x1="246.1" y1="320.4" x2="182.3" y2="327.6" stroke="#101218" stroke-width="2.04" /><line x1="182.3" y1="327.6" x2="114.8" y2="335.2" stroke="#101218" stroke-width="2.05" /><line x1="339.3" y1="299.9" x2="283.0" y2="306.0" stroke="#101218" stroke-width="2.02" /><line x1="283.0" y1="306.0" x2="223.8" y2="312.5" stroke="#101218" stroke-width="2.02" /><line x1="223.8" y1="312.5" x2="161.4" y2="319.2" stroke="#101218" stroke-width="2.03" /><line x1="161.4" y1="319.2" x2="95.6" y2="326.4" stroke="#101218" stroke-width="2.04" /><line x1="95.6" y1="326.4" x2="26.1" y2="333.9" stroke="#101218" stroke-width="2.05" /><line x1="315.9" y1="293.2" x2="260.5" y2="299.0" stroke="#101218" stroke-width="2.01" /><line x1="260.5" y1="299.0" x2="202.4" y2="305.0" stroke="#101218" stroke-width="2.02" /><line x1="202.4" y1="305.0" x2="141.2" y2="311.4" stroke="#101218" stroke-width="2.02" /><line x1="141.2" y1="311.4" x2="76.7" y2="318.1" stroke="#101218" stroke-width="2.03" /><line x1="293.7" y1="286.8" x2="239.5" y2="292.3" stroke="#101218" stroke-width="2.0" /><line x1="239.5" y1="292.3" x2="182.5" y2="298.0" stroke="#101218" stroke-width="2.01" /><line x1="182.5" y1="298.0" x2="122.7" y2="304.0" stroke="#101218" stroke-width="2.01" /><line x1="122.7" y1="304.0" x2="59.9" y2="310.3" stroke="#101218" stroke-width="2.02" /><line x1="59.9" y1="310.3" x2="-6.3" y2="317.0" stroke="#101218" stroke-width="2.03" /><line x1="272.7" y1="280.8" x2="219.3" y2="286.0" stroke="#101218" stroke-width="2.0" /><line x1="219.3" y1="286.0" x2="163.4" y2="291.4" stroke="#101218" stroke-width="2.0" /><line x1="163.4" y1="291.4" x2="104.7" y2="297.1" stroke="#101218" stroke-width="2.01" /><line x1="104.7" y1="297.1" x2="43.1" y2="303.0" stroke="#101218" stroke-width="2.01" /><line x1="252.8" y1="275.1" x2="200.5" y2="280.0" stroke="#101218" stroke-width="1.99" /><line x1="200.5" y1="280.0" x2="145.7" y2="285.1" stroke="#101218" stroke-width="1.99" /><line x1="145.7" y1="285.1" x2="88.3" y2="290.5" stroke="#101218" stroke-width="2.0" /><line x1="88.3" y1="290.5" x2="28.1" y2="296.1" stroke="#101218" stroke-width="2.01" /><line x1="28.1" y1="296.1" x2="-35.0" y2="302.0" stroke="#101218" stroke-width="2.01" /><line x1="233.9" y1="269.6" x2="182.4" y2="274.3" stroke="#101218" stroke-width="1.98" /><line x1="182.4" y1="274.3" x2="128.5" y2="279.1" stroke="#101218" stroke-width="1.99" /><line x1="128.5" y1="279.1" x2="72.2" y2="284.2" stroke="#101218" stroke-width="1.99" /><line x1="72.2" y1="284.2" x2="13.2" y2="289.6" stroke="#101218" stroke-width="2.0" /><line x1="215.9" y1="264.4" x2="165.4" y2="268.9" stroke="#101218" stroke-width="1.98" /><line x1="165.4" y1="268.9" x2="112.6" y2="273.5" stroke="#101218" stroke-width="1.98" /><line x1="112.6" y1="273.5" x2="57.4" y2="278.3" stroke="#101218" stroke-width="1.99" /><line x1="57.4" y1="278.3" x2="-0.2" y2="283.4" stroke="#101218" stroke-width="1.99" /><line x1="-0.2" y1="283.4" x2="-60.6" y2="288.6" stroke="#101218" stroke-width="2.0" /><line x1="198.8" y1="259.5" x2="149.0" y2="263.7" stroke="#101218" stroke-width="1.97" /><line x1="149.0" y1="263.7" x2="97.1" y2="268.1" stroke="#101218" stroke-width="1.98" /><line x1="97.1" y1="268.1" x2="42.9" y2="272.7" stroke="#101218" stroke-width="1.98" /><line x1="42.9" y1="272.7" x2="-13.7" y2="277.5" stroke="#101218" stroke-width="1.98" /><line x1="1370.9" y1="715.2" x2="1233.2" y2="666.9" stroke="#9ca0b0" stroke-width="0.9" /><line x1="1370.5" y1="716.5" x2="1232.8" y2="668.1" stroke="#0e0f16" stroke-width="1.0" /><line x1="1371.4" y1="714.0" x2="1233.6" y2="665.7" stroke="#1e2030" stroke-width="0.95" /><line x1="1233.2" y1="666.9" x2="1114.3" y2="625.2" stroke="#9ca0b0" stroke-width="0.9" /><line x1="1232.8" y1="668.0" x2="1113.9" y2="626.3" stroke="#0e0f16" stroke-width="1.0" /><line x1="1233.6" y1="665.8" x2="1114.7" y2="624.1" stroke="#1e2030" stroke-width="0.95" /><line x1="1114.3" y1="625.2" x2="1010.6" y2="588.8" stroke="#9ca0b0" stroke-width="0.9" /><line x1="1113.9" y1="626.2" x2="1010.3" y2="589.8" stroke="#0e0f16" stroke-width="1.0" /><line x1="1114.7" y1="624.2" x2="1011.0" y2="587.8" stroke="#1e2030" stroke-width="0.95" /><line x1="1010.6" y1="588.8" x2="919.5" y2="556.8" stroke="#9ca0b0" stroke-width="0.9" /><line x1="1010.3" y1="589.7" x2="919.1" y2="557.7" stroke="#0e0f16" stroke-width="1.0" /><line x1="1011.0" y1="587.9" x2="919.8" y2="555.9" stroke="#1e2030" stroke-width="0.95" /><line x1="919.5" y1="556.8" x2="838.6" y2="528.4" stroke="#9ca0b0" stroke-width="0.9" /><line x1="919.1" y1="557.7" x2="838.3" y2="529.3" stroke="#0e0f16" stroke-width="1.0" /><line x1="919.8" y1="555.9" x2="838.9" y2="527.6" stroke="#1e2030" stroke-width="0.95" /><line x1="838.6" y1="528.4" x2="766.5" y2="503.1" stroke="#9ca0b0" stroke-width="0.9" /><line x1="838.3" y1="529.3" x2="766.2" y2="503.9" stroke="#0e0f16" stroke-width="1.0" /><line x1="838.9" y1="527.6" x2="766.8" y2="502.3" stroke="#1e2030" stroke-width="0.95" /><line x1="766.5" y1="503.1" x2="701.7" y2="480.4" stroke="#9ca0b0" stroke-width="0.9" /><line x1="766.2" y1="503.9" x2="701.4" y2="481.2" stroke="#0e0f16" stroke-width="1.0" /><line x1="766.8" y1="502.3" x2="702.0" y2="479.6" stroke="#1e2030" stroke-width="0.95" /><line x1="701.7" y1="480.4" x2="643.2" y2="459.8" stroke="#9ca0b0" stroke-width="0.9" /><line x1="701.4" y1="481.1" x2="642.9" y2="460.6" stroke="#0e0f16" stroke-width="1.0" /><line x1="702.0" y1="479.6" x2="643.5" y2="459.1" stroke="#1e2030" stroke-width="0.95" /><line x1="643.2" y1="459.8" x2="590.1" y2="441.2" stroke="#9ca0b0" stroke-width="0.9" /><line x1="643.0" y1="460.5" x2="589.9" y2="441.9" stroke="#0e0f16" stroke-width="1.0" /><line x1="643.4" y1="459.2" x2="590.4" y2="440.5" stroke="#1e2030" stroke-width="0.95" /><line x1="590.1" y1="441.2" x2="541.7" y2="424.2" stroke="#9ca0b0" stroke-width="0.9" /><line x1="589.9" y1="441.9" x2="541.5" y2="424.9" stroke="#0e0f16" stroke-width="1.0" /><line x1="590.3" y1="440.6" x2="542.0" y2="423.6" stroke="#1e2030" stroke-width="0.95" /><line x1="541.7" y1="424.2" x2="497.4" y2="408.7" stroke="#9ca0b0" stroke-width="0.9" /><line x1="541.5" y1="424.9" x2="497.2" y2="409.3" stroke="#0e0f16" stroke-width="1.0" /><line x1="541.9" y1="423.6" x2="497.6" y2="408.1" stroke="#1e2030" stroke-width="0.95" /><line x1="497.4" y1="408.7" x2="456.7" y2="394.4" stroke="#9ca0b0" stroke-width="0.9" /><line x1="497.2" y1="409.3" x2="456.5" y2="395.0" stroke="#0e0f16" stroke-width="1.0" /><line x1="497.6" y1="408.1" x2="456.9" y2="393.8" stroke="#1e2030" stroke-width="0.95" /><line x1="456.7" y1="394.4" x2="419.2" y2="381.2" stroke="#9ca0b0" stroke-width="0.9" /><line x1="456.5" y1="395.0" x2="419.0" y2="381.8" stroke="#0e0f16" stroke-width="1.0" /><line x1="456.9" y1="393.8" x2="419.4" y2="380.7" stroke="#1e2030" stroke-width="0.95" /><line x1="419.2" y1="381.2" x2="384.5" y2="369.1" stroke="#101218" stroke-width="2.1" /><line x1="384.5" y1="369.1" x2="352.3" y2="357.8" stroke="#101218" stroke-width="2.09" /><line x1="352.3" y1="357.8" x2="322.4" y2="347.3" stroke="#101218" stroke-width="2.07" /><line x1="322.4" y1="347.3" x2="294.5" y2="337.5" stroke="#101218" stroke-width="2.06" /><line x1="294.5" y1="337.5" x2="268.4" y2="328.3" stroke="#101218" stroke-width="2.05" /><line x1="268.4" y1="328.3" x2="243.9" y2="319.7" stroke="#101218" stroke-width="2.04" /><line x1="243.9" y1="319.7" x2="221.0" y2="311.7" stroke="#101218" stroke-width="2.03" /><line x1="221.0" y1="311.7" x2="199.4" y2="304.1" stroke="#101218" stroke-width="2.02" /><line x1="199.4" y1="304.1" x2="179.1" y2="297.0" stroke="#101218" stroke-width="2.01" /><line x1="179.1" y1="297.0" x2="159.9" y2="290.2" stroke="#101218" stroke-width="2.01" /><line x1="159.9" y1="290.2" x2="141.8" y2="283.9" stroke="#101218" stroke-width="2.0" /><line x1="141.8" y1="283.9" x2="124.6" y2="277.8" stroke="#101218" stroke-width="1.99" /><line x1="124.6" y1="277.8" x2="108.3" y2="272.1" stroke="#101218" stroke-width="1.99" /><line x1="108.3" y1="272.1" x2="92.9" y2="266.7" stroke="#101218" stroke-width="1.98" /><line x1="373.3" y1="451.4" x2="333.8" y2="433.6" stroke="#9ca0b0" stroke-width="0.9" /><line x1="373.0" y1="452.0" x2="333.5" y2="434.3" stroke="#0e0f16" stroke-width="1.0" /><line x1="373.6" y1="450.7" x2="334.1" y2="433.0" stroke="#1e2030" stroke-width="0.95" /><line x1="333.8" y1="433.6" x2="297.7" y2="417.4" stroke="#9ca0b0" stroke-width="0.9" /><line x1="333.5" y1="434.2" x2="297.4" y2="418.0" stroke="#0e0f16" stroke-width="1.0" /><line x1="334.1" y1="433.0" x2="297.9" y2="416.8" stroke="#1e2030" stroke-width="0.95" /><line x1="297.7" y1="417.4" x2="264.5" y2="402.5" stroke="#9ca0b0" stroke-width="0.9" /><line x1="297.4" y1="418.0" x2="264.3" y2="403.1" stroke="#0e0f16" stroke-width="1.0" /><line x1="297.9" y1="416.8" x2="264.8" y2="401.9" stroke="#1e2030" stroke-width="0.95" /><line x1="264.5" y1="402.5" x2="234.0" y2="388.8" stroke="#9ca0b0" stroke-width="0.9" /><line x1="264.3" y1="403.1" x2="233.8" y2="389.4" stroke="#0e0f16" stroke-width="1.0" /><line x1="264.8" y1="401.9" x2="234.3" y2="388.2" stroke="#1e2030" stroke-width="0.95" /><line x1="234.0" y1="388.8" x2="205.9" y2="376.2" stroke="#101218" stroke-width="2.11" /><line x1="205.9" y1="376.2" x2="179.8" y2="364.4" stroke="#101218" stroke-width="2.09" /><line x1="179.8" y1="364.4" x2="155.5" y2="353.5" stroke="#101218" stroke-width="2.08" /><line x1="155.5" y1="353.5" x2="132.9" y2="343.4" stroke="#101218" stroke-width="2.07" /><line x1="132.9" y1="343.4" x2="111.8" y2="333.9" stroke="#101218" stroke-width="2.06" /><line x1="111.8" y1="333.9" x2="92.1" y2="325.0" stroke="#101218" stroke-width="2.05" /><line x1="92.1" y1="325.0" x2="73.6" y2="316.7" stroke="#101218" stroke-width="2.04" /><line x1="73.6" y1="316.7" x2="56.2" y2="308.9" stroke="#101218" stroke-width="2.03" /><line x1="56.2" y1="308.9" x2="39.8" y2="301.6" stroke="#101218" stroke-width="2.02" /><line x1="39.8" y1="301.6" x2="24.3" y2="294.6" stroke="#101218" stroke-width="2.01" /><line x1="24.3" y1="294.6" x2="9.7" y2="288.1" stroke="#101218" stroke-width="2.0" /><line x1="9.7" y1="288.1" x2="-4.1" y2="281.8" stroke="#101218" stroke-width="2.0" /><line x1="-4.1" y1="281.8" x2="-17.2" y2="276.0" stroke="#101218" stroke-width="1.99" /><polyline points="1512.3,637.5 1186.4,816.6 373.3,451.4 282.4,467.6 -75.5,280.9 194.2,258.2 1512.3,637.5" fill="none" stroke="#050505" stroke-width="2.2" stroke-linejoin="miter"/><line x1="676.6" y1="397.0" x2="373.3" y2="451.4" stroke="#050505" stroke-width="2.2" /><line x1="1512.3" y1="639.7" x2="1186.4" y2="818.8" stroke="#2a2a30" stroke-width="1.2" /><line x1="1186.4" y1="818.6" x2="373.3" y2="453.4" stroke="#2a2a30" stroke-width="1.2" /><line x1="373.3" y1="452.8" x2="282.4" y2="469.0" stroke="#2a2a30" stroke-width="1.2" /><line x1="282.4" y1="468.9" x2="-75.5" y2="282.2" stroke="#2a2a30" stroke-width="1.2" /><line x1="76.0" y1="187.0" x2="180.0" y2="181.0" stroke="#3a3a3a" stroke-width="1" /><line x1="180.0" y1="181.0" x2="192.5" y2="257.0" stroke="#3a3a3a" stroke-width="1" /><line x1="180.0" y1="181.0" x2="477.5" y2="232.5" stroke="#3a3a3a" stroke-width="1" /><line x1="562.4" y1="247.2" x2="1548.0" y2="418.0" stroke="#3a3a3a" stroke-width="1" /><line x1="1549.5" y1="410.0" x2="1493.5" y2="746.0" stroke="#3a3a3a" stroke-width="1" /><line x1="1507.0" y1="670.8" x2="1461.0" y2="699.4" stroke="#3a3a3a" stroke-width="1" /><line x1="1419.6" y1="725.9" x2="1365.4" y2="758.3" stroke="#3a3a3a" stroke-width="1" /><line x1="1372.0" y1="714.0" x2="1364.0" y2="764.0" stroke="#3a3a3a" stroke-width="1" /><line x1="1365.0" y1="758.0" x2="1301.7" y2="794.0" stroke="#3a3a3a" stroke-width="1" /><line x1="1258.7" y1="819.5" x2="1180.7" y2="863.4" stroke="#3a3a3a" stroke-width="1" /><line x1="1494.4" y1="739.0" x2="1376.6" y2="815.7" stroke="#3a3a3a" stroke-width="1" /><line x1="1336.8" y1="842.7" x2="1188.0" y2="942.0" stroke="#3a3a3a" stroke-width="1" /><line x1="1186.5" y1="817.5" x2="1175.5" y2="942.0" stroke="#3a3a3a" stroke-width="1" /><line x1="739.5" y1="616.0" x2="740.7" y2="655.0" stroke="#3a3a3a" stroke-width="1" /><line x1="828.0" y1="656.0" x2="827.0" y2="697.0" stroke="#3a3a3a" stroke-width="1" /><line x1="928.6" y1="702.0" x2="928.0" y2="746.0" stroke="#3a3a3a" stroke-width="1" /><line x1="1047.0" y1="755.0" x2="1044.5" y2="802.0" stroke="#3a3a3a" stroke-width="1" /><line x1="740.7" y1="653.0" x2="756.8" y2="660.7" stroke="#3a3a3a" stroke-width="1" /><line x1="809.9" y1="686.9" x2="849.0" y2="705.0" stroke="#3a3a3a" stroke-width="1" /><line x1="902.0" y1="730.7" x2="958.6" y2="756.8" stroke="#3a3a3a" stroke-width="1" /><line x1="1010.5" y1="782.6" x2="1083.5" y2="816.4" stroke="#3a3a3a" stroke-width="1" /><line x1="1137.4" y1="843.7" x2="1181.5" y2="865.2" stroke="#3a3a3a" stroke-width="1" /><line x1="373.4" y1="452.0" x2="382.5" y2="531.0" stroke="#3a3a3a" stroke-width="1" /><line x1="382.0" y1="529.0" x2="631.9" y2="660.7" stroke="#3a3a3a" stroke-width="1" /><line x1="679.0" y1="687.6" x2="1165.0" y2="946.0" stroke="#3a3a3a" stroke-width="1" /><line x1="389.0" y1="461.0" x2="390.8" y2="490.0" stroke="#3a3a3a" stroke-width="1" /><line x1="280.0" y1="467.0" x2="287.0" y2="527.0" stroke="#3a3a3a" stroke-width="1" /><line x1="286.7" y1="524.7" x2="301.6" y2="521.6" stroke="#3a3a3a" stroke-width="1" /><line x1="368.8" y1="506.7" x2="379.0" y2="505.2" stroke="#3a3a3a" stroke-width="1" /><line x1="181.0" y1="438.0" x2="206.0" y2="433.3" stroke="#3a3a3a" stroke-width="1" /><line x1="247.0" y1="474.0" x2="275.0" y2="467.5" stroke="#3a3a3a" stroke-width="1" /><line x1="176.6" y1="185.9" x2="183.4" y2="176.1" stroke="#333" stroke-width="2" /><line x1="1542.8" y1="421.0" x2="1553.2" y2="415.0" stroke="#333" stroke-width="2" /><line x1="1504.0" y1="675.2" x2="1510.0" y2="664.8" stroke="#333" stroke-width="2" /><line x1="1362.0" y1="763.2" x2="1368.0" y2="752.8" stroke="#333" stroke-width="2" /><line x1="1491.0" y1="745.2" x2="1497.0" y2="734.8" stroke="#333" stroke-width="2" /><line x1="1178.5" y1="869.2" x2="1184.5" y2="858.8" stroke="#333" stroke-width="2" /><line x1="735.8" y1="656.4" x2="745.6" y2="649.6" stroke="#333" stroke-width="2" /><line x1="822.1" y1="698.4" x2="831.9" y2="691.6" stroke="#333" stroke-width="2" /><line x1="923.1" y1="746.9" x2="932.9" y2="740.1" stroke="#333" stroke-width="2" /><line x1="1039.6" y1="802.4" x2="1049.4" y2="795.6" stroke="#333" stroke-width="2" /><line x1="283.3" y1="529.6" x2="290.1" y2="519.8" stroke="#333" stroke-width="2" /><line x1="375.6" y1="509.9" x2="382.4" y2="500.1" stroke="#333" stroke-width="2" /><line x1="380.4" y1="534.8" x2="383.6" y2="523.2" stroke="#333" stroke-width="2" /><line x1="388.4" y1="493.6" x2="392.6" y2="482.4" stroke="#333" stroke-width="2" /><line x1="375.0" y1="481.8" x2="378.2" y2="470.2" stroke="#333" stroke-width="2" /><line x1="165.0" y1="438.0" x2="182.0" y2="438.4" stroke="#333" stroke-width="2.4" /><line x1="175.8" y1="439.0" x2="182.0" y2="442.7" stroke="#333" stroke-width="1" /><line x1="231.0" y1="474.0" x2="247.0" y2="474.0" stroke="#333" stroke-width="2.4" /><line x1="228.0" y1="468.0" x2="236.7" y2="472.3" stroke="#333" stroke-width="1" /><text x="520" y="247" text-anchor="middle" font-family="Liberation Sans, sans-serif" font-size="16" fill="#4d4d4d">16885 mm</text><text x="204" y="462" text-anchor="middle" font-family="Liberation Sans, sans-serif" font-size="16" fill="#4d4d4d">1200 mm</text><text x="383" y="489" text-anchor="middle" font-family="Liberation Sans, sans-serif" font-size="16" fill="#4d4d4d">219 mm</text><text x="334" y="521" text-anchor="middle" font-family="Liberation Sans, sans-serif" font-size="16" fill="#4d4d4d">596 mm</text><text x="653" y="681" text-anchor="middle" font-family="Liberation Sans, sans-serif" font-size="16" fill="#4d4d4d">6219 mm</text><text x="782" y="680" text-anchor="middle" font-family="Liberation Sans, sans-serif" font-size="16" fill="#4d4d4d">600 mm</text><text x="875" y="725" text-anchor="middle" font-family="Liberation Sans, sans-serif" font-size="16" fill="#4d4d4d">600 mm</text><text x="983" y="777" text-anchor="middle" font-family="Liberation Sans, sans-serif" font-size="16" fill="#4d4d4d">600 mm</text><text x="1110" y="837" text-anchor="middle" font-family="Liberation Sans, sans-serif" font-size="16" fill="#4d4d4d">600 mm</text><text x="1280" y="813" text-anchor="middle" font-family="Liberation Sans, sans-serif" font-size="16" fill="#4d4d4d">1200 mm</text><text x="1356" y="836" text-anchor="middle" font-family="Liberation Sans, sans-serif" font-size="16" fill="#4d4d4d">2404 mm</text><text x="1440" y="720" text-anchor="middle" font-family="Liberation Sans, sans-serif" font-size="16" fill="#4d4d4d">1204 mm</text><text x="84" y="193" text-anchor="end" font-family="Liberation Sans, sans-serif" font-size="16" fill="#4d4d4d">mm</text><line x1="1619.0" y1="116.0" x2="1476.0" y2="942.0" stroke="#2a2ab4" stroke-width="1.1" /><line x1="77.0" y1="930.0" x2="84.0" y2="942.0" stroke="#d02020" stroke-width="1.3" />
</svg><div class="a" style="left:0;top:300px;width:77px;height:64px;background:#f3f3f3;border-bottom:1px solid #c8c8c8;overflow:hidden">
<div class="a" style="left:0;top:0;width:77px;height:3px;background:#f6f6f6"></div>
<div class="a" style="left:0;top:3px;width:76px;height:21px;background:#a3b9d5"></div>
<svg class="a" style="left:60px;top:8px" width="10" height="10"><path d="M1 1L9 9M9 1L1 9" stroke="#3e4e66" stroke-width="1.1"/></svg>
</div><div class="a" style="left:76px;top:300px;width:2px;height:64px;background:#fbfbfb"></div><svg class="a" style="left:9px;top:332px" width="24" height="24" viewBox="0 0 24 24"><path d="M1 10 L15.5 4.5 L23 16 L8.5 22.5 Z" fill="#5a5a52" stroke="#111" stroke-width="1.3"/><path d="M4.5 8.7 L12 21 M8.5 7 L16 19.5 M12 5.8 L19.5 17.8 M3 13.5 L17.5 7.5 M5.5 17 L20 11.5 M2 11 L22 15" stroke="#9a9a90" stroke-width="0.7" fill="none"/><path d="M15.5 4.5 L23 16 L8.5 22.5Z" fill="#1e1e1a" opacity="0.45"/><circle cx="11.5" cy="13.5" r="1.9" fill="#e8102a"/></svg><svg class="a" style="left:45px;top:332px" width="24" height="24" viewBox="0 0 24 24"><path d="M6 2.5 L22.5 2 L20 21.5 L1.5 16 Z" fill="#a4a492" stroke="#111" stroke-width="1.1"/><path d="M6 2.5 L22.5 2 L12.5 11Z" fill="#5e5e54"/><path d="M22.5 2 L20 21.5 L12.5 11Z" fill="#74746a"/><path d="M6 2.5 L20 21.5 M1.5 16 L12.5 11" stroke="#111" stroke-width="0.8"/><path d="M1.8 15.8 L22 2.5" stroke="#e8102a" stroke-width="1.1"/><circle cx="2.2" cy="15.5" r="1.7" fill="#e8102a"/><circle cx="21.8" cy="2.6" r="1.7" fill="#e8102a"/></svg><div class="a" style="left:1642px;top:85px;width:278px;height:857px;background:#f5f6fa;border-left:1px solid #d8d8d8"></div><div class="a" style="left:1642px;top:85px;width:278px;height:27px;background:linear-gradient(#a3bcd8,#c5d5e8);border-top:1px solid #9ab0c8"></div><div class="a" style="left:1647px;top:93px;font-size:11.2px;color:#1c2530;white-space:nowrap">Default Tray</div><svg class="a" style="left:1886px;top:92px" width="32" height="14"><rect x="0.5" y="0.5" width="11" height="11" fill="none" stroke="#5a6a80"/><path d="M3 3H9M6 3V9M4 6H8" stroke="#3a4a60" stroke-width="1.2"/><rect x="18.5" y="0.5" width="11" height="11" fill="none" stroke="#5a6a80"/><path d="M21 3L27 9M27 3L21 9" stroke="#3a4a60" stroke-width="1"/></svg><div class="a" style="left:1642px;top:112px;width:278px;height:4px;background:#eef0f4"></div><div class="a" style="left:1644px;top:116px;width:272px;height:20px;background:linear-gradient(#f4f4f4 0%,#e2e2e2 35%,#c8c8c8 70%,#a8a8a8 100%);border:1px solid #b0b0b0;border-bottom-color:#8c8c8c"></div><div class="a" style="left:1650px;top:120px;font-size:9px;color:#000">▼</div><div class="a" style="left:1663px;top:121px;font-size:10.8px;color:#111;white-space:nowrap">Entity Info</div><div class="a" style="left:1899px;top:119px;width:13px;height:13px;background:#fff;border-radius:2px;border:1px solid #d0d0d0"></div><svg class="a" style="left:1902px;top:122px" width="7" height="7"><path d="M1.5 1.5L5.5 5.5M5.5 1.5L1.5 5.5" stroke="#333" stroke-width="1.1"/></svg><div class="a" style="left:1653px;top:145px;font-size:11.5px;font-weight:bold;color:#111;white-space:nowrap">No Selection</div><div class="a" style="left:1653px;top:163px;width:255px;height:1px;background:#8a8a8a"></div><div class="a" style="left:1644px;top:333px;width:272px;height:20px;background:linear-gradient(#f4f4f4 0%,#e2e2e2 35%,#c8c8c8 70%,#a8a8a8 100%);border:1px solid #b0b0b0;border-bottom-color:#8c8c8c"></div><div class="a" style="left:1650px;top:337px;font-size:9px;color:#000">▼</div><div class="a" style="left:1663px;top:338px;font-size:10.8px;color:#111;white-space:nowrap">Materials</div><div class="a" style="left:1899px;top:336px;width:13px;height:13px;background:#fff;border-radius:2px;border:1px solid #d0d0d0"></div><svg class="a" style="left:1902px;top:339px" width="7" height="7"><path d="M1.5 1.5L5.5 5.5M5.5 1.5L1.5 5.5" stroke="#333" stroke-width="1.1"/></svg><div class="a" style="left:1644px;top:354px;width:272px;height:74px;background:#eeeeee"></div><svg class="a" style="left:1646px;top:355px" width="67" height="71"><rect x="0.5" y="0.5" width="66" height="70" fill="#fdfdfd" stroke="#9a9a9a"/><path d="M2 4 L63 65 L2 65 Z" fill="#a3adb7"/><path d="M2 4 L63 65" stroke="#8090a0" stroke-width="0.6"/><rect x="2.5" y="2.5" width="61" height="63" fill="none" stroke="#ccc"/></svg><div class="a" style="left:1718px;top:356px;width:168px;height:18px;background:#efefef;border-bottom:1px solid #e0e0e0;border-right:1px solid #e6e6e6"></div><div class="a" style="left:1720px;top:358px;font-size:11.5px;color:#8a8a8a">Default</div><svg class="a" style="left:1893px;top:356px" width="24" height="72"><path d="M5 2H15L10 7Z" fill="#111"/><rect x="5" y="8" width="10" height="8" fill="#111"/><path d="M10 9.5V14.5M7.5 12H12.5" stroke="#fff" stroke-width="1.5"/><path d="M6 28 L16 24 L20 27 L20 36 L10 41 L5 37Z" fill="#222"/><path d="M8 29 L16 26 M8 31 L17 28" stroke="#ddd" stroke-width="1"/><circle cx="8" cy="37" r="4.5" fill="#fff" stroke="#111" stroke-width="1.3"/><path d="M8 34.5V39.5M5.5 37H10.5" stroke="#111" stroke-width="1.2"/><rect x="0" y="47" width="22" height="23" fill="#fff"/><path d="M0 48 L22 70 L0 70Z" fill="#a3adb7"/></svg><div class="a" style="left:1644px;top:427px;width:272px;height:2px;background:#b8b8b8;border-bottom:1px solid #fff"></div><div class="a" style="left:1644px;top:429px;width:272px;height:26px;background:#efefef"></div><div class="a" style="left:1644px;top:434px;width:46px;height:21px;background:#f7f7f7"></div><div class="a" style="left:1690px;top:436px;width:40px;height:19px;background:#f0f0f0;border-left:1px solid #e6e6e6;border-right:1px solid #e6e6e6"></div><div class="a" style="left:1650px;top:437px;font-size:12px;color:#111">Select</div><div class="a" style="left:1692px;top:439px;font-size:12px;color:#111">Edit</div><svg class="a" style="left:1893px;top:432px" width="20" height="20"><path d="M2 18 L4 14 L13 6 L15 8 L6 16 Z" fill="#e8c070" stroke="#444" stroke-width="1"/><path d="M12 5 L15 2 C16.5 0.5 19.5 3.5 18 5 L15 8Z" fill="#111"/></svg><div class="a" style="left:1644px;top:454px;width:272px;height:1px;background:#e4e4e4"></div><div class="a" style="left:1644px;top:455px;width:272px;height:31px;background:#eeeeee"></div><svg class="a" style="left:1652px;top:462px" width="70" height="18"><path d="M2 8 L8 2 L8 5.5 L13 5.5 L13 10.5 L8 10.5 L8 14 Z" fill="#fafafa" stroke="#999" stroke-width="1"/><path d="M39 8 L33 2 L33 5.5 L28 5.5 L28 10.5 L33 10.5 L33 14 Z" fill="#fafafa" stroke="#999" stroke-width="1"/><path d="M48 8.5 L56 1.5 L64 8.5" fill="none" stroke="#111" stroke-width="2"/><path d="M50 8 V16 H62 V8" fill="#fff" stroke="#111" stroke-width="1.6"/><rect x="54.5" y="10.5" width="3" height="5.5" fill="#111"/></svg><div class="a" style="left:1722px;top:461px;width:169px;height:24px;background:#fff;border:1px solid #a8a8a8;border-bottom:none"></div><div class="a" style="left:1727px;top:466px;font-size:12px;color:#111">Metal</div><svg class="a" style="left:1876px;top:470px" width="12" height="8"><path d="M1 1.5 L6 6 L11 1.5" fill="none" stroke="#333" stroke-width="1"/></svg><svg class="a" style="left:1896px;top:461px" width="20" height="20"><path d="M10 2 L18 10 L10 18Z" fill="#111"/><rect x="2" y="5" width="10" height="11" rx="1" fill="#5a8ad0" stroke="#111" stroke-width="1"/><path d="M4 9H10M4 12H10" stroke="#fff" stroke-width="1"/></svg><div class="a" style="left:1644px;top:485px;width:272px;height:1px;background:#d4d4d4"></div><div class="a" style="left:1644px;top:486px;width:272px;height:200px;background:#ffffff"></div><div class="a" style="left:1650px;top:489px;width:50px;height:50px;border:1px solid #9c9c9c;box-shadow:inset 0 0 0 1.5px #fff;background:linear-gradient(#b0b0b0,#a6a6a6 50%,#b2b2b2)"></div><div class="a" style="left:1702px;top:489px;width:50px;height:50px;border:1px solid #9c9c9c;box-shadow:inset 0 0 0 1.5px #fff;background:linear-gradient(135deg,#d0d8e2,#c2ccd6 50%,#d4dce4)"></div><div class="a" style="left:1754px;top:489px;width:50px;height:50px;border:1px solid #9c9c9c;box-shadow:inset 0 0 0 1.5px #fff;background:linear-gradient(90deg,#d8d8d8,#8a8a8a 12%,#e8e8e8 30%,#7a7a7a 45%,#f0f0f0 60%,#909090 80%,#d0d0d0)"></div><div class="a" style="left:1806px;top:489px;width:50px;height:50px;border:1px solid #9c9c9c;box-shadow:inset 0 0 0 1.5px #fff;background:#979797"></div><div class="a" style="left:1858px;top:489px;width:50px;height:50px;border:1px solid #9c9c9c;box-shadow:inset 0 0 0 1.5px #fff;background:linear-gradient(135deg,#a0a0a0,#929292)"></div><div class="a" style="left:1650px;top:540px;width:50px;height:50px;border:1px solid #9c9c9c;box-shadow:inset 0 0 0 1.5px #fff;background:#c47458"></div><div class="a" style="left:1702px;top:540px;width:50px;height:50px;border:1px solid #9c9c9c;box-shadow:inset 0 0 0 1.5px #fff;background:#767676"></div><div class="a" style="left:1754px;top:540px;width:50px;height:50px;border:1px solid #9c9c9c;box-shadow:inset 0 0 0 1.5px #fff;background:#ebebeb"></div><div class="a" style="left:1806px;top:540px;width:50px;height:50px;border:1px solid #9c9c9c;box-shadow:inset 0 0 0 1.5px #fff;background:radial-gradient(circle,#8a90a0 0 0.8px,transparent 1.2px) 0 0/6px 6px,linear-gradient(90deg,#5c6272,#6a7080 50%,#5e6474)"></div><div class="a" style="left:1858px;top:540px;width:50px;height:50px;border:1px solid #9c9c9c;box-shadow:inset 0 0 0 1.5px #fff;background:#dcdcdc"></div><div class="a" style="left:1650px;top:592px;width:50px;height:50px;border:1px solid #9c9c9c;box-shadow:inset 0 0 0 1.5px #fff;background:#babdbf"></div><svg class="a" style="left:1652px;top:542px" width="46" height="46"><filter id="rust"><feTurbulence type="fractalNoise" baseFrequency="0.25" numOctaves="2" seed="3"/><feColorMatrix values="0 0 0 0 0.86  0 0 0 0 0.56  0 0 0 0 0.44  2.2 0 0 0 -1.05"/></filter><rect width="46" height="46" filter="url(#rust)" opacity="0.7"/></svg><svg class="a" style="left:1860px;top:542px" width="46" height="46"><defs><pattern id="dp" width="12" height="12" patternUnits="userSpaceOnUse"><path d="M2 4.5 L5 2 M8 10 L11 7.5" stroke="#6e6e6e" stroke-width="1.8" stroke-linecap="round"/><path d="M7.5 2 L10 4.5 M1.5 8 L4 10.5" stroke="#7e7e7e" stroke-width="1.6" stroke-linecap="round"/><path d="M2.3 3.6 L5 1.4 M8.3 9.1 L11 6.9" stroke="#fafafa" stroke-width="0.7"/></pattern></defs><rect width="46" height="46" fill="url(#dp)"/></svg><svg class="a" style="left:1807px;top:489px" width="50" height="50"><path d="M8 8 L42 42 M42 8 L8 42 M3 25 H14 M36 25 H47" stroke="#7a7a7a" stroke-width="2.5"/><path d="M8 9 L42 43 M42 9 L8 43" stroke="#b8b8b8" stroke-width="1"/></svg><div class="a" style="left:1644px;top:686px;width:272px;height:3px;background:#e8e8e8;border-top:1px solid #cfcfcf"></div><div class="a" style="left:1644px;top:690px;width:272px;height:20px;background:linear-gradient(#f4f4f4 0%,#e2e2e2 35%,#c8c8c8 70%,#a8a8a8 100%);border:1px solid #b0b0b0;border-bottom-color:#8c8c8c"></div><div class="a" style="left:1650px;top:694px;font-size:8px;color:#000">▶</div><div class="a" style="left:1663px;top:695px;font-size:10.8px;color:#111;white-space:nowrap">Components</div><div class="a" style="left:1899px;top:693px;width:13px;height:13px;background:#fff;border-radius:2px;border:1px solid #d0d0d0"></div><svg class="a" style="left:1902px;top:696px" width="7" height="7"><path d="M1.5 1.5L5.5 5.5M5.5 1.5L1.5 5.5" stroke="#333" stroke-width="1.1"/></svg><div class="a" style="left:1644px;top:711px;width:272px;height:20px;background:linear-gradient(#f4f4f4 0%,#e2e2e2 35%,#c8c8c8 70%,#a8a8a8 100%);border:1px solid #b0b0b0;border-bottom-color:#8c8c8c"></div><div class="a" style="left:1650px;top:715px;font-size:8px;color:#000">▶</div><div class="a" style="left:1663px;top:716px;font-size:10.8px;color:#111;white-space:nowrap">Styles</div><div class="a" style="left:1899px;top:714px;width:13px;height:13px;background:#fff;border-radius:2px;border:1px solid #d0d0d0"></div><svg class="a" style="left:1902px;top:717px" width="7" height="7"><path d="M1.5 1.5L5.5 5.5M5.5 1.5L1.5 5.5" stroke="#333" stroke-width="1.1"/></svg><div class="a" style="left:1644px;top:732px;width:272px;height:20px;background:linear-gradient(#f4f4f4 0%,#e2e2e2 35%,#c8c8c8 70%,#a8a8a8 100%);border:1px solid #b0b0b0;border-bottom-color:#8c8c8c"></div><div class="a" style="left:1650px;top:736px;font-size:8px;color:#000">▶</div><div class="a" style="left:1663px;top:737px;font-size:10.8px;color:#111;white-space:nowrap">Tags</div><div class="a" style="left:1899px;top:735px;width:13px;height:13px;background:#fff;border-radius:2px;border:1px solid #d0d0d0"></div><svg class="a" style="left:1902px;top:738px" width="7" height="7"><path d="M1.5 1.5L5.5 5.5M5.5 1.5L1.5 5.5" stroke="#333" stroke-width="1.1"/></svg><div class="a" style="left:1644px;top:753px;width:272px;height:20px;background:linear-gradient(#f4f4f4 0%,#e2e2e2 35%,#c8c8c8 70%,#a8a8a8 100%);border:1px solid #b0b0b0;border-bottom-color:#8c8c8c"></div><div class="a" style="left:1650px;top:757px;font-size:8px;color:#000">▶</div><div class="a" style="left:1663px;top:758px;font-size:10.8px;color:#111;white-space:nowrap">Shadows</div><div class="a" style="left:1899px;top:756px;width:13px;height:13px;background:#fff;border-radius:2px;border:1px solid #d0d0d0"></div><svg class="a" style="left:1902px;top:759px" width="7" height="7"><path d="M1.5 1.5L5.5 5.5M5.5 1.5L1.5 5.5" stroke="#333" stroke-width="1.1"/></svg><div class="a" style="left:1644px;top:774px;width:272px;height:20px;background:linear-gradient(#f4f4f4 0%,#e2e2e2 35%,#c8c8c8 70%,#a8a8a8 100%);border:1px solid #b0b0b0;border-bottom-color:#8c8c8c"></div><div class="a" style="left:1650px;top:778px;font-size:8px;color:#000">▶</div><div class="a" style="left:1663px;top:779px;font-size:10.8px;color:#111;white-space:nowrap">Scenes</div><div class="a" style="left:1899px;top:777px;width:13px;height:13px;background:#fff;border-radius:2px;border:1px solid #d0d0d0"></div><svg class="a" style="left:1902px;top:780px" width="7" height="7"><path d="M1.5 1.5L5.5 5.5M5.5 1.5L1.5 5.5" stroke="#333" stroke-width="1.1"/></svg><div class="a" style="left:1644px;top:795px;width:272px;height:20px;background:linear-gradient(#f4f4f4 0%,#e2e2e2 35%,#c8c8c8 70%,#a8a8a8 100%);border:1px solid #b0b0b0;border-bottom-color:#8c8c8c"></div><div class="a" style="left:1650px;top:799px;font-size:8px;color:#000">▶</div><div class="a" style="left:1663px;top:800px;font-size:10.8px;color:#111;white-space:nowrap">Instructor</div><div class="a" style="left:1899px;top:798px;width:13px;height:13px;background:#fff;border-radius:2px;border:1px solid #d0d0d0"></div><svg class="a" style="left:1902px;top:801px" width="7" height="7"><path d="M1.5 1.5L5.5 5.5M5.5 1.5L1.5 5.5" stroke="#333" stroke-width="1.1"/></svg>
<div class="a" style="left:1636px;top:84px;width:6px;height:858px;background:#eeeeee"></div>
</body></html>
